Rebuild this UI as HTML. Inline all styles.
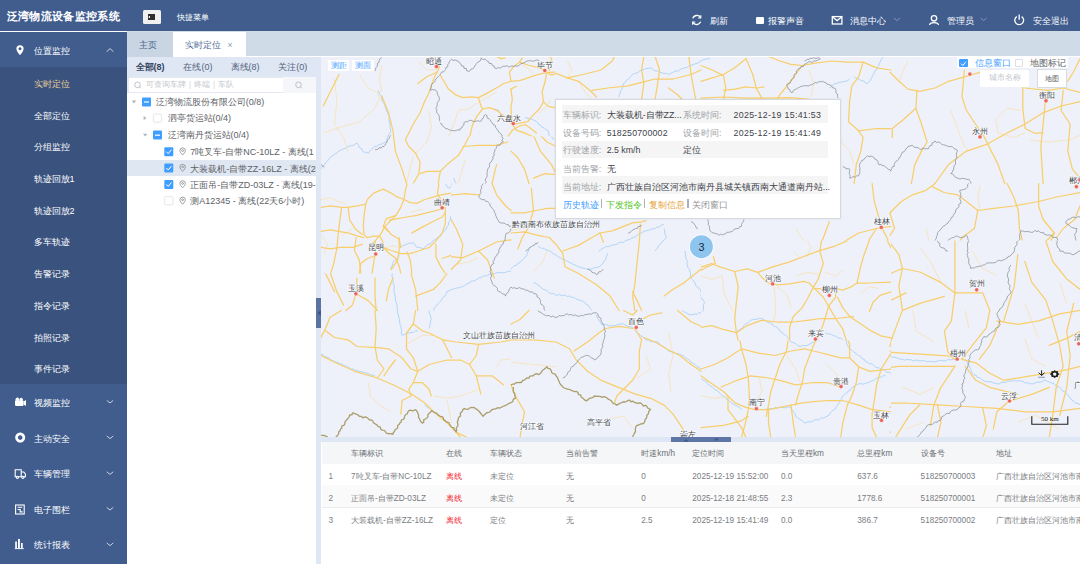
<!DOCTYPE html><html><head><meta charset="utf-8"><style>
*{box-sizing:border-box;margin:0;padding:0}
html,body{width:1080px;height:564px;overflow:hidden;background:#fff;font-family:"Liberation Sans",sans-serif;}
.abs{position:absolute}
.t{position:absolute;white-space:nowrap;line-height:1}
svg{position:absolute;left:0;top:0}
</style></head><body><div class="abs" style="left:0px;top:0px;width:1080px;height:31.2px;background:#405d8e"></div>
<div class="t" style="left:6.5px;top:10.90px;font-size:11.4px;color:#fff;font-weight:bold;letter-spacing:0.36px">泛湾物流设备监控系统</div>
<div class="abs" style="left:143px;top:10px;width:18px;height:14.4px;background:#f0f0f0;border-radius:1.5px"></div>
<div class="abs" style="left:148.2px;top:14px;width:6.8px;height:1.7px;background:#2e2e2e"></div>
<div class="abs" style="left:150.2px;top:16.3px;width:4.8px;height:1.4px;background:#2e2e2e"></div>
<div class="abs" style="left:148.4px;top:16px;width:1px;height:2px;background:#6a5a3a"></div>
<div class="abs" style="left:148.2px;top:18.3px;width:6.8px;height:1.7px;background:#2e2e2e"></div>
<div class="t" style="left:177px;top:13.60px;font-size:7.8px;color:#fff;">快捷菜单</div>
<div class="t" style="left:709.5px;top:16.60px;font-size:9px;color:#fff;">刷新</div>
<div class="abs" style="left:756px;top:16.5px;width:7.5px;height:7px;background:#fff;border-radius:1px"></div>
<div class="t" style="left:768px;top:16.60px;font-size:9px;color:#fff;">报警声音</div>
<div class="t" style="left:850px;top:16.60px;font-size:9px;color:#fff;">消息中心</div>
<div class="t" style="left:947px;top:16.60px;font-size:9px;color:#fff;">管理员</div>
<div class="t" style="left:1032.5px;top:16.60px;font-size:9px;color:#fff;">安全退出</div>

<svg width="1080" height="32" style="left:0;top:0">
 <g fill="none" stroke="#fff" stroke-width="1.3">
  <path d="M700.6 17.6 A4.3 4.3 0 0 0 692.8 18.4"/><path d="M692.8 22.4 A4.3 4.3 0 0 0 700.6 21.6"/>
  <path d="M700.8 15.3 L700.8 18 L698.1 18" stroke-width="1.1"/><path d="M692.6 24.7 L692.6 22 L695.3 22" stroke-width="1.1"/>
  <rect x="832.3" y="16.6" width="9.6" height="7.4"/><path d="M832.3 16.8 L837.1 20.6 L841.9 16.8"/>
  <path d="M894 18 L897 20.6 L900 18" stroke="#8a9cbd" stroke-width="0.9"/>
  <path d="M980.5 18 L983.5 20.6 L986.5 18" stroke="#8a9cbd" stroke-width="0.9"/>
  <circle cx="934" cy="18.3" r="2.7"/><path d="M929.6 25 C929.8 21.8 938.2 21.8 938.4 25"/>
  <path d="M1016.8 16.6 A4.4 4.4 0 1 0 1021.6 16.6"/><path d="M1019.2 14.6 L1019.2 19.8"/>
 </g>
</svg>
<div class="abs" style="left:0px;top:31.5px;width:126.5px;height:532.5px;background:#405d8e"></div>
<div class="abs" style="left:0px;top:67px;width:126.5px;height:317.3px;background:#39527e"></div>
<div class="t" style="left:33.7px;top:46.50px;font-size:9px;color:#fff;">位置监控</div>
<div class="t" style="left:33.5px;top:79.77px;font-size:9px;color:#f0d49a;">实时定位</div>
<div class="t" style="left:33.5px;top:111.50px;font-size:9px;color:#fff;">全部定位</div>
<div class="t" style="left:33.5px;top:143.23px;font-size:9px;color:#fff;">分组监控</div>
<div class="t" style="left:33.5px;top:174.96px;font-size:9px;color:#fff;">轨迹回放1</div>
<div class="t" style="left:33.5px;top:206.69px;font-size:9px;color:#fff;">轨迹回放2</div>
<div class="t" style="left:33.5px;top:238.42px;font-size:9px;color:#fff;">多车轨迹</div>
<div class="t" style="left:33.5px;top:270.14px;font-size:9px;color:#fff;">告警记录</div>
<div class="t" style="left:33.5px;top:301.88px;font-size:9px;color:#fff;">指令记录</div>
<div class="t" style="left:33.5px;top:333.61px;font-size:9px;color:#fff;">拍照记录</div>
<div class="t" style="left:33.5px;top:365.34px;font-size:9px;color:#fff;">事件记录</div>
<div class="t" style="left:33.5px;top:398.80px;font-size:9px;color:#fff;">视频监控</div>
<div class="t" style="left:33.5px;top:434.50px;font-size:9px;color:#fff;">主动安全</div>
<div class="t" style="left:33.5px;top:470.40px;font-size:9px;color:#fff;">车辆管理</div>
<div class="t" style="left:33.5px;top:505.80px;font-size:9px;color:#fff;">电子围栏</div>
<div class="t" style="left:33.5px;top:541.40px;font-size:9px;color:#fff;">统计报表</div>

<svg width="127" height="564" style="left:0;top:0">
 <g fill="#fff">
  <path d="M20 45.2 a3.6 3.6 0 0 1 3.6 3.6 c0 2.6 -3.6 6.3 -3.6 6.3 c0 0 -3.6 -3.7 -3.6 -6.3 a3.6 3.6 0 0 1 3.6 -3.6z M20 47.3 a1.5 1.5 0 1 0 0.01 0z" fill-rule="evenodd"/>
  <!-- video -->
  <rect x="15" y="400.3" width="8.5" height="5.6" rx="0.8"/><circle cx="17.4" cy="399.3" r="1.8"/><circle cx="21.2" cy="399.3" r="1.6"/><path d="M23.5 401.5 L26 400 L26 406 L23.5 404.5z"/>
  <!-- safety ring -->
  <path d="M20.2 432.6 a5 5 0 1 0 0.01 0z M20.2 435.3 a2.3 2.3 0 1 1 -0.01 0z" fill-rule="evenodd"/>
  <!-- bars -->
  <rect x="15.2" y="541.5" width="1.7" height="7"/><rect x="18" y="539" width="1.9" height="9.5"/><rect x="21" y="543" width="1.7" height="5.5"/><rect x="14.8" y="548.2" width="9" height="0.9"/>
 </g>
 <g fill="none" stroke="#fff" stroke-width="1.1">
  <path d="M15.2 469.8 h6 v7 h-6z M21.2 472 h2.6 l1.6 2 v2.8 h-4.2"/><circle cx="17.4" cy="477.3" r="1.1" fill="#405d8e"/><circle cx="22.9" cy="477.3" r="1.1" fill="#405d8e"/>
  <rect x="15.6" y="505" width="8.6" height="9" /><path d="M17.6 507.3 h4.6 M17.6 509.5 h2.6 v2.4 h2.4"/>
 </g>
 <g fill="none" stroke="#c9d3e4" stroke-width="1">
  <path d="M106.6 51.7 L110 48.6 L113.4 51.7"/>
  <path d="M106.8 400.4 L110 403 L113.2 400.4"/>
  <path d="M106.8 436 L110 438.6 L113.2 436"/>
  <path d="M106.8 471.8 L110 474.4 L113.2 471.8"/>
  <path d="M106.8 507.4 L110 510 L113.2 507.4"/>
  <path d="M106.8 543 L110 545.6 L113.2 543"/>
 </g>
</svg>
<div class="abs" style="left:126.5px;top:31.2px;width:953.5px;height:25.3px;background:#d0dbe8"></div>
<div class="abs" style="left:127px;top:31.5px;width:46px;height:25px;background:#c9d5e3"></div>
<div class="abs" style="left:173px;top:31.5px;width:72.5px;height:25px;background:#fff"></div>
<div class="t" style="left:139.3px;top:40.70px;font-size:9px;color:#4a6591;">主页</div>
<div class="t" style="left:185.3px;top:40.70px;font-size:9px;color:#4a6591;">实时定位</div>
<div class="t" style="left:227.5px;top:40.75px;font-size:8.5px;color:#8a9ab5;">×</div>
<div class="abs" style="left:126.5px;top:56.5px;width:194.5px;height:507.5px;background:#dee7f3"></div>
<div class="t" style="left:135.6px;top:63.30px;font-size:9px;color:#34435e;font-weight:bold;">全部(8)</div>
<div class="t" style="left:183.4px;top:63.30px;font-size:9px;color:#56657e;">在线(0)</div>
<div class="t" style="left:230.6px;top:63.30px;font-size:9px;color:#56657e;">离线(8)</div>
<div class="t" style="left:278.2px;top:63.30px;font-size:9px;color:#56657e;">关注(0)</div>
<div class="abs" style="left:127.5px;top:76.7px;width:155px;height:16.4px;background:#fff;border:0.7px solid #e6e9ef;border-right:none"></div>
<div class="abs" style="left:283px;top:76.5px;width:32.7px;height:16.8px;background:#f4f6f9"></div>
<div class="t" style="left:146px;top:81.20px;font-size:7.6px;color:#c2c6cc;">可查询车牌｜终端｜车队</div>
<div class="abs" style="left:127px;top:93.3px;width:189.3px;height:470.7px;background:#fff"></div>
<div class="abs" style="left:127px;top:160.2px;width:189.3px;height:16px;background:#dfe7f2"></div>

<svg width="330" height="564" style="left:0;top:0">
 <g fill="none" stroke="#b5b9bf" stroke-width="0.9">
  <circle cx="137.5" cy="84.8" r="2.8"/><path d="M139.5 86.8 L141 88.3"/>
  <circle cx="298.5" cy="84.8" r="2.8"/><path d="M300.5 86.8 L302 88.3"/>
 </g>
 <g fill="#b0b4ba">
  <path d="M131.8 100.6 L136.2 100.6 L134 103.4z"/>
  <path d="M143.6 115.9 L146.4 118.1 L143.6 120.3z"/>
  <path d="M143 133.8 L147.4 133.8 L145.2 136.6z"/>
 </g>
 <g>
  <rect x="142" y="97.4" width="9" height="9" rx="1" fill="#409eff"/><rect x="144" y="101.4" width="5" height="1.2" fill="#fff"/>
  <rect x="153.4" y="114" width="8.2" height="8.2" rx="1" fill="#fff" stroke="#dcdfe6" stroke-width="0.8"/>
  <rect x="153" y="130.6" width="9" height="9" rx="1" fill="#409eff"/><rect x="155" y="134.6" width="5" height="1.2" fill="#fff"/>
  <rect x="164.3" y="147.2" width="9" height="9" rx="1" fill="#409eff"/><path d="M166.3 151.6 L168.2 153.6 L171.4 149.7" fill="none" stroke="#fff" stroke-width="1"/>
  <rect x="164.3" y="163.6" width="9" height="9" rx="1" fill="#409eff"/><path d="M166.3 168 L168.2 170 L171.4 166.1" fill="none" stroke="#fff" stroke-width="1"/>
  <rect x="164.3" y="180" width="9" height="9" rx="1" fill="#409eff"/><path d="M166.3 184.4 L168.2 186.4 L171.4 182.5" fill="none" stroke="#fff" stroke-width="1"/>
  <rect x="164.7" y="196.6" width="8.2" height="8.2" rx="1" fill="#fff" stroke="#dcdfe6" stroke-width="0.8"/>
 </g>
 <g fill="none" stroke="#8f949a" stroke-width="0.9">
  <path d="M182.6 155 c-1.6 -1.8 -2.7 -3 -2.7 -4.4 a2.7 2.7 0 0 1 5.4 0 c0 1.4 -1.1 2.6 -2.7 4.4z"/><circle cx="182.6" cy="150.6" r="0.9"/>
  <path d="M182.6 171.4 c-1.6 -1.8 -2.7 -3 -2.7 -4.4 a2.7 2.7 0 0 1 5.4 0 c0 1.4 -1.1 2.6 -2.7 4.4z"/><circle cx="182.6" cy="167" r="0.9"/>
  <path d="M182.6 187.8 c-1.6 -1.8 -2.7 -3 -2.7 -4.4 a2.7 2.7 0 0 1 5.4 0 c0 1.4 -1.1 2.6 -2.7 4.4z"/><circle cx="182.6" cy="183.4" r="0.9"/>
  <path d="M182.6 204.2 c-1.6 -1.8 -2.7 -3 -2.7 -4.4 a2.7 2.7 0 0 1 5.4 0 c0 1.4 -1.1 2.6 -2.7 4.4z"/><circle cx="182.6" cy="199.8" r="0.9"/>
 </g>
</svg>
<div class="abs" style="left:127px;top:93px;width:189.3px;height:130px;overflow:hidden">
<div class="t" style="left:28.80000000000001px;top:5.10px;font-size:9px;color:#606266;">泛湾物流股份有限公司(0/8)</div>
<div class="t" style="left:40.5px;top:20.80px;font-size:9px;color:#606266;">泗亭货运站(0/4)</div>
<div class="t" style="left:40.5px;top:37.60px;font-size:9px;color:#606266;">泛湾南丹货运站(0/4)</div>
<div class="t" style="left:63.30000000000001px;top:55.10px;font-size:9px;color:#606266;">7吨叉车-自带NC-10LZ - 离线(1</div>
<div class="t" style="left:63.30000000000001px;top:71.50px;font-size:9px;color:#606266;">大装载机-自带ZZ-16LZ - 离线(2</div>
<div class="t" style="left:63.30000000000001px;top:87.90px;font-size:9px;color:#606266;">正面吊-自带ZD-03LZ - 离线(19-</div>
<div class="t" style="left:63.30000000000001px;top:104.10px;font-size:9px;color:#606266;">测A12345 - 离线(22天6小时)</div>
</div>
<div class="abs" style="left:316.3px;top:298px;width:5px;height:30px;background:#5b73a0"></div>
<svg width="1080" height="564" style="left:0;top:0"><path d="M320.8 310.2 L317.6 313 L320.8 315.8z" fill="#3a5182"/></svg>
<div class="abs" style="left:321px;top:56.5px;width:759px;height:381px;background:#eef1f9;overflow:hidden">
<svg width="759" height="381" viewBox="321 56.5 759 381" style="left:0;top:0">
<style>.lr{fill:none;stroke:#f6e3b9;stroke-width:0.9;stroke-linejoin:round}.rv{fill:none;stroke:#a9d1f7;stroke-width:0.9;stroke-linejoin:round}.mr{fill:none;stroke:#f8ce6c;stroke-width:1.25;stroke-linejoin:round;stroke-linecap:round}.gb{fill:none;stroke:#8e939c;stroke-width:0.8;stroke-linejoin:round}.cb{fill:none;stroke:#ab9e6c;stroke-width:1.3;stroke-linejoin:round}</style>
<clipPath id="cpE2"><rect x="321" y="183" width="130" height="90"/></clipPath>
<clipPath id="cpG2"><rect x="701" y="240" width="190" height="100"/></clipPath>
<clipPath id="cpL2"><rect x="891" y="240" width="189" height="197"/></clipPath>
<clipPath id="cpAB"><rect x="440" y="56" width="115" height="80"/></clipPath>
<mask id="mk" maskUnits="userSpaceOnUse" x="0" y="0" width="1100" height="600"><rect x="0" y="0" width="1100" height="600" fill="#fff"/><rect x="321" y="183" width="130" height="90" fill="#000"/><rect x="701" y="240" width="190" height="100" fill="#000"/><rect x="891" y="240" width="189" height="197" fill="#000"/><rect x="440" y="56" width="115" height="80" fill="#000"/></mask>
<g mask="url(#mk)"><polyline class="lr" points="359.3,74.0 368.3,87.5 377.3,92.0 379.5,98.8 372.8,110.0 359.3,121.3 343.5,125.8 323.3,132.5"/><polyline class="lr" points="334.5,78.5 336.8,101.0 334.5,123.5 343.5,137.0 348.0,150.6"/><polyline class="lr" points="381.8,65.0 379.5,78.5 381.8,92.0"/><polyline class="lr" points="429.1,110.0 431.3,128.0 426.8,141.5 415.6,152.8"/><polyline class="lr" points="447.1,130.3 456.1,112.3 478.6,105.5 487.6,104.4"/><polyline class="lr" points="413.3,155.1 408.8,173.1 406.5,183.0"/><polyline class="lr" points="465.1,159.6 458.3,183.0"/><polyline class="lr" points="417.8,60.5 426.8,69.5 435.8,69.5"/><polyline class="lr" points="567.3,60.5 571.8,69.5 567.3,77.4"/><polyline class="lr" points="578.5,80.8 585.3,92.0 592.0,98.8"/><polyline class="lr" points="515.5,85.3 524.5,96.5 533.5,107.8"/><polyline class="lr" points="809.1,69.5 813.6,83.0 811.3,96.5"/><polyline class="lr" points="840.6,141.5 849.6,150.6 854.1,164.1"/><polyline class="lr" points="950.8,110.0 957.5,128.0 964.3,146.0 968.8,150.6"/><polyline class="lr" points="995.8,119.0 1007.1,107.8 1020.6,110.0"/><polyline class="lr" points="995.8,119.0 998.1,132.5 1013.8,137.0 1025.1,132.5"/><polyline class="lr" points="1029.6,139.3 1047.6,141.5 1070.1,139.3 1080.0,134.8"/><polyline class="lr" points="908.0,60.5 903.5,69.5 899.0,80.8"/><polyline class="lr" points="321.0,196.5 334.5,198.8 348.0,203.3"/><polyline class="lr" points="406.5,212.3 417.8,207.8 429.1,205.5"/><polyline class="lr" points="456.1,264.0 467.3,261.8 478.6,257.3"/><polyline class="lr" points="533.5,270.8 542.5,261.8 547.0,250.5"/><polyline class="lr" points="529.0,223.5 520.0,228.0 511.0,230.3"/><polyline class="lr" points="773.0,284.3 777.5,300.1 779.8,310.0"/><polyline class="lr" points="797.8,273.0 806.8,268.5 820.3,266.3"/><polyline class="lr" points="838.3,270.8 845.1,282.1"/><polyline class="lr" points="795.6,228.0 804.6,241.5 806.8,255.0"/><polyline class="lr" points="926.0,228.0 930.5,246.0 928.3,264.0"/><polyline class="lr" points="980.0,185.3 977.8,196.5 980.0,210.0"/><polyline class="lr" points="1025.1,273.0 1038.6,268.5 1047.6,259.5"/><polyline class="lr" points="368.3,382.0 370.5,395.5 379.5,404.6 390.8,411.3"/><polyline class="lr" points="406.5,343.8 422.3,334.8 433.6,334.8"/><polyline class="lr" points="433.6,395.5 447.1,397.8 460.6,395.5 478.6,388.8"/><polyline class="lr" points="447.1,400.0 449.3,411.3 451.6,422.6"/><polyline class="lr" points="496.6,366.3 501.1,359.5 511.0,358.4"/><polyline class="lr" points="668.6,332.5 673.1,355.0 668.6,373.0 670.8,391.0"/><polyline class="lr" points="646.1,355.0 650.6,368.5 637.1,377.5"/><polyline class="lr" points="610.1,418.1 623.6,415.8 632.6,427.1"/><polyline class="lr" points="511.0,361.8 533.5,364.0 556.0,366.3"/><polyline class="lr" points="759.5,377.5 761.8,391.0 757.3,400.0"/><polyline class="lr" points="786.5,355.0 795.6,368.5 800.1,382.0"/><polyline class="lr" points="827.1,364.0 836.1,373.0 840.6,384.3"/><polyline class="lr" points="701.0,395.5 714.5,397.8 728.0,395.5"/><polyline class="lr" points="773.0,310.0 775.3,323.5 773.0,337.0"/><polyline class="lr" points="912.5,310.0 917.0,323.5 912.5,337.0"/><polyline class="lr" points="894.5,377.5 899.0,391.0 896.8,404.6"/><polyline class="lr" points="1011.6,337.0 1016.1,355.0 1011.6,368.5"/><polyline class="lr" points="1029.6,343.8 1047.6,337.0 1065.6,332.5"/></g>
<g clip-path="url(#cpE2)"><polyline class="lr" points="321.0,199.0 330.6,197.4 337.0,200.5 346.5,203.7"/><polyline class="lr" points="321.0,234.0 327.4,243.6 324.2,253.2"/><polyline class="lr" points="341.7,235.6 348.1,230.9 352.9,227.7"/><polyline class="lr" points="410.3,211.7 416.7,210.1 423.1,208.5"/><polyline class="lr" points="386.4,246.8 392.8,245.2 397.6,246.8"/></g>
<g clip-path="url(#cpG2)"><polyline class="lr" points="773.7,284.3 775.4,298.5 775.4,314.4 771.9,325.1"/><polyline class="lr" points="777.2,286.1 786.1,293.2 791.4,307.4"/><polyline class="lr" points="807.3,240.0 810.9,247.1 807.3,256.0"/><polyline class="lr" points="796.7,275.4 807.3,271.9 818.0,273.7"/><polyline class="lr" points="825.1,271.9 835.7,275.4 842.8,270.1"/><polyline class="lr" points="860.5,293.2 869.4,286.1 878.2,287.9"/><polyline class="lr" points="701.0,275.4 711.6,279.0 722.3,275.4"/><polyline class="lr" points="722.3,275.4 724.0,293.2 732.9,310.9"/><polyline class="lr" points="793.2,250.6 800.3,257.7 807.3,254.2"/></g>
<g clip-path="url(#cpL2)"><polyline class="lr" points="850.0,292.4 871.0,288.9 891.9,292.4"/><polyline class="lr" points="912.9,309.9 916.4,330.9 933.9,341.4"/><polyline class="lr" points="972.3,250.5 982.8,268.0 996.8,275.0"/><polyline class="lr" points="1024.8,337.9 1031.8,358.8 1045.7,365.8"/><polyline class="lr" points="902.4,386.8 919.9,393.8 933.9,386.8"/><polyline class="lr" points="850.0,386.8 871.0,386.8 888.4,393.8"/><polyline class="lr" points="1017.8,421.8 1035.2,414.8 1059.7,428.7"/><polyline class="lr" points="905.9,428.7 923.4,421.8"/><polyline class="lr" points="965.3,309.9 968.8,327.4"/><polyline class="lr" points="1059.7,281.9 1066.7,302.9"/><polyline class="lr" points="919.9,247.0 930.4,261.0 940.9,281.9"/><polyline class="lr" points="864.0,337.9 881.5,344.9 888.4,355.3"/><polyline class="lr" points="1024.8,302.9 1038.7,337.9"/></g>
<g clip-path="url(#cpAB)"><polyline class="lr" points="448.5,136.0 454.2,122.7 458.4,109.9 468.4,108.5 476.9,102.8 486.8,97.1 496.7,91.5"/><polyline class="lr" points="522.3,64.5 530.8,70.2 533.6,74.4"/><polyline class="lr" points="539.3,112.7 547.8,104.2 550.6,98.6"/></g>
<g mask="url(#mk)"><polyline class="rv" points="321.0,168.6 322.1,166.8 323.2,165.0 325.0,163.9 325.7,161.8 327.5,160.6 328.6,158.8 330.0,157.3 331.4,155.7 333.4,155.1 334.7,153.4 336.7,152.7 338.1,151.2 339.8,150.1 341.8,149.3 343.5,148.3 345.6,147.9 347.2,146.2 349.2,145.5 351.3,145.2 353.4,144.9 355.1,143.6 357.0,142.7 358.5,144.6 359.3,147.0 361.8,148.2 362.6,150.6 364.3,151.8 366.5,151.8 368.3,152.8 369.6,150.8 371.3,149.0 373.2,147.5 375.0,146.0 377.1,145.7 378.6,144.1 380.7,143.9 382.6,143.2 384.3,142.1 386.3,141.5 387.1,139.7 387.2,137.6 388.0,135.7 388.9,133.9 390.3,132.3 390.8,130.3 390.4,128.1 389.9,125.8 389.9,123.5 389.4,121.3 388.9,119.1 389.3,116.7 388.5,114.5 387.9,112.5 386.5,110.7 386.1,108.6 385.2,106.6 384.8,104.5 383.8,102.6 382.4,100.9 381.8,98.8 381.6,96.3 379.6,94.5 379.1,92.1 378.4,89.8"/><polyline class="rv" points="453.8,177.6 454.6,180.4 456.1,183.0"/><polyline class="rv" points="619.1,96.5 619.2,94.4 620.3,92.7 620.4,90.5 621.9,88.9 622.6,87.0 623.0,85.0 623.6,83.0 625.4,81.9 626.4,79.8 628.3,78.7 629.7,77.1 631.1,75.6 632.6,74.0 634.3,73.1 636.4,72.6 638.2,71.9 639.8,70.4 641.6,69.5 643.9,69.2 645.9,67.8 648.4,68.1 650.6,67.3 652.3,68.3 653.9,69.7 655.8,70.4 657.9,70.6 659.6,71.8 661.9,72.2 664.0,73.1 666.5,72.8 668.6,74.0 670.4,73.2 672.2,72.1 674.0,71.3 675.9,70.4 678.1,70.6 679.8,69.5 681.5,68.3 683.5,67.7 685.4,67.1 687.5,67.0 689.0,65.2 691.1,65.0 693.1,64.0 695.1,63.3 697.3,62.8 699.2,61.8 701.0,60.5"/><polyline class="rv" points="531.3,119.0 532.8,120.4 535.0,120.6 536.7,121.6 538.6,122.5 540.3,123.5 541.6,125.6 543.2,127.4 545.7,128.3 547.0,130.3 548.7,131.8 550.0,133.7 551.4,135.5 552.4,137.5 553.8,139.3"/><polyline class="rv" points="829.3,87.5 831.1,86.5 832.5,85.0 834.0,83.6 836.1,83.0 838.3,82.3 840.5,81.7 842.9,81.4 845.1,80.8 847.6,80.2 849.6,78.5"/><polyline class="rv" points="854.1,76.3 855.9,77.5 857.9,78.2 859.8,79.3 861.7,80.3 864.0,80.5 865.4,82.6 867.6,83.0 869.0,81.5 870.3,79.9 871.3,78.2 872.1,76.3 873.1,74.3 874.2,72.4 875.0,70.3 876.8,68.9 877.2,66.6 878.8,65.0 879.2,62.9 880.3,61.2 881.1,59.4 882.2,57.7 883.4,56.0"/><polyline class="rv" points="701.0,60.5 703.1,59.3 705.3,58.7 707.6,58.3 710.0,58.3"/><polyline class="rv" points="390.8,266.3 391.5,268.5 391.7,270.8 392.4,273.0 391.9,275.4 392.6,277.6 393.0,279.8 393.0,282.1 393.9,284.3 394.4,286.5 393.9,288.9 394.0,291.2 394.5,293.4 395.3,295.6 395.2,297.7 395.5,299.7 395.9,301.8 397.0,303.7 396.9,305.9 397.4,307.9 397.5,310.0"/><polyline class="rv" points="433.6,310.0 434.3,307.9 435.5,306.1 437.0,304.6 438.2,302.9 439.9,301.5 441.4,300.0 442.1,297.9 443.9,296.6 445.2,294.9 446.4,293.1 447.1,291.1 448.9,290.2 450.8,289.4 452.7,288.8 454.7,288.1 456.6,287.5 458.7,287.4 460.6,286.6 462.6,286.2 464.4,285.2 466.0,283.8 467.9,283.1 469.8,282.4 471.1,280.6 473.3,280.5 475.2,279.9 477.0,278.8 478.6,277.6 480.6,277.2 482.4,276.2 484.2,275.2 486.4,275.4 488.2,274.1 490.3,274.1 492.1,273.0 494.4,273.4 496.6,272.3 498.8,272.1 501.1,271.9 503.6,272.3 506.1,271.7 508.5,270.6 511.0,270.8"/><polyline class="rv" points="447.1,189.8 447.8,187.8 448.9,186.1 450.9,185.0 451.6,183.0"/><polyline class="rv" points="598.8,250.5 600.7,249.8 601.9,247.9 604.1,247.5 605.6,246.0 607.9,246.2 610.1,245.4 612.3,244.5 614.6,244.3 616.8,243.8 618.5,242.6 620.3,241.7 622.7,242.1 624.4,241.0 626.2,240.1 628.1,239.3 630.1,238.9 631.6,237.4 633.7,237.0 635.5,236.1 637.1,234.8 638.7,233.5 640.5,232.7 642.3,231.8 644.1,230.9 646.1,230.3 648.4,229.8 650.5,228.8 652.8,228.5 655.1,228.0 656.6,226.7 658.9,226.7 660.4,225.1 662.3,224.4 664.1,223.5"/><polyline class="rv" points="655.1,250.5 656.3,248.9 657.8,247.5 658.4,245.4 659.6,243.8 661.7,242.5 663.0,240.4 664.7,238.7 666.3,237.0 665.8,234.8 664.6,232.7 664.6,230.3 664.1,228.0"/><polyline class="rv" points="511.0,268.5 512.5,266.8 514.2,265.3 516.7,264.8 517.9,262.8 520.0,261.8 521.7,260.1 523.6,258.6 525.1,256.8 526.8,255.0 527.3,252.7 528.3,250.5 529.0,248.3"/><polyline class="rv" points="538.0,246.0 539.9,246.9 541.6,247.9 543.8,247.8 545.5,249.1 547.5,249.5 549.3,250.5 551.3,251.4 552.8,253.1 554.9,253.9 556.7,255.1 558.5,256.5 560.5,257.3 562.1,258.7 564.2,259.0 565.9,260.1 567.7,260.9 569.5,261.8 571.3,262.7 573.0,263.8 575.0,264.4 576.7,265.4 578.5,266.3 580.8,266.7 582.9,267.8 585.2,267.9 587.4,268.6 589.8,268.5 592.2,268.6 594.2,267.1 596.6,266.9 598.8,266.3 600.9,265.0 602.5,263.3 603.5,260.9 605.6,259.5 605.8,257.1 607.0,255.0 607.8,252.8"/><polyline class="rv" points="533.5,282.1 535.6,282.7 537.3,284.0 539.2,284.9 540.6,286.8 542.3,288.0 544.0,289.3 546.4,289.5 547.8,291.3 549.6,292.4 551.5,293.3 553.6,293.1 555.5,294.3 557.4,294.7 559.6,293.9 561.4,295.2 563.5,294.7 565.5,295.0 567.4,296.0 569.5,295.6 571.3,296.8 573.7,296.8 575.5,298.0 577.4,299.0 579.5,299.6 581.5,300.2 583.4,301.2 585.3,302.3 586.4,304.1 588.5,304.9 589.3,307.0 590.8,308.4 592.0,310.0"/><polyline class="rv" points="684.3,250.5 685.5,252.5 685.6,254.6 685.7,256.8 686.4,258.9 687.5,260.8 686.8,263.2 687.6,265.2 687.9,267.3 689.6,269.1 689.9,271.2 690.7,273.2 690.2,275.6 691.1,277.6 692.6,279.1 694.0,280.6 694.9,282.6 695.6,284.6 696.9,286.3 698.8,287.5 700.2,289.1 701.0,291.1"/><polyline class="rv" points="701.0,293.3 701.0,295.7 702.0,297.8 702.4,300.1 703.3,302.3 702.6,304.8 701.0,306.8"/><polyline class="rv" points="321.0,353.9 323.2,354.3 324.7,356.1 326.8,356.7 329.0,357.2 330.4,359.3 332.5,359.9 334.5,360.7 336.2,361.9 338.4,361.8 339.8,363.6 342.1,363.4 343.5,365.2 345.6,365.5 347.5,366.2 349.2,367.3 350.8,368.6 353.1,368.5 354.8,369.7 356.9,369.8 358.8,370.9 361.0,371.1 363.0,371.6 365.0,372.2 367.1,372.7 369.1,373.5 371.1,374.3 373.1,374.9 375.0,375.7"/><polyline class="rv" points="397.5,310.0 397.6,312.3 398.6,314.5 398.7,316.8 399.5,318.9 399.6,321.2 399.8,323.5 400.9,325.6 401.0,327.9 401.8,330.1 401.3,332.6 402.0,334.8 404.3,334.1 406.4,332.9 408.8,332.5 411.0,331.9 413.4,332.0 415.4,330.3 417.8,330.3"/><polyline class="rv" points="429.1,310.0 429.2,312.4 430.3,314.5 430.8,316.8 431.3,319.0 430.3,321.1 430.3,323.5 429.6,325.8 429.1,328.0"/><polyline class="rv" points="424.6,404.6 426.1,405.9 427.6,407.4 429.7,407.7 431.3,409.1"/><polyline class="rv" points="596.5,314.5 597.0,316.5 598.1,318.2 599.1,320.0 600.3,321.6 601.0,323.5 603.4,323.9 605.7,324.0 607.9,324.7 610.1,325.8 612.2,324.8 614.6,325.3 616.8,324.3 619.0,323.8 621.2,323.3 623.6,323.5 625.6,324.8 627.9,325.7 630.2,326.3 632.6,326.9 634.3,328.6 635.9,330.4 637.1,332.5 639.0,333.6 640.7,335.2 642.8,336.2 644.3,337.9 646.1,339.3 648.4,339.4 650.4,340.8 652.7,341.3 655.1,341.1 657.3,341.5 659.2,342.5 660.1,344.6 662.3,345.2 663.9,346.5 665.8,347.4 667.1,349.1 668.6,350.5 670.5,351.1 672.4,351.8 674.5,352.1 676.3,353.1 678.5,353.1 680.3,354.1 682.1,355.0 684.2,355.9 685.8,357.6 687.9,358.6 689.7,359.9 691.1,361.8 693.2,362.9 695.3,364.2 697.0,365.9 699.0,367.2 701.0,368.5"/><polyline class="rv" points="682.1,310.0 683.7,311.2 685.6,312.0 687.4,313.0 689.1,314.1 691.1,314.5 693.0,313.9 695.0,313.4 697.2,313.8 698.9,312.2 701.0,312.3"/><polyline class="rv" points="701.0,377.5 702.4,379.1 704.1,380.3 706.2,380.9 707.1,383.0 708.7,384.4 710.5,385.4 712.3,386.5 713.7,388.1 715.2,389.5 717.4,390.0 718.7,391.7 720.3,393.0 721.6,394.6 723.5,395.5 724.9,397.2 726.4,398.5 728.3,399.5 729.6,401.1 731.4,402.2 733.0,403.5 734.8,404.6 736.7,405.4 738.5,406.3 740.1,407.5 741.5,409.1"/><polyline class="rv" points="757.3,319.0 759.2,319.6 761.2,320.0 762.7,321.7 764.8,322.1 766.6,322.9 768.5,323.5 770.3,324.6 772.0,325.5 773.9,326.2 776.1,326.5 777.5,328.0 779.1,329.7 780.9,331.0 782.9,332.1 784.7,333.5 786.5,334.8 787.5,336.6 789.3,337.8 789.6,340.0 791.0,341.5 793.0,342.1 794.9,342.8 796.6,343.9 798.1,345.4 800.1,346.0 802.2,345.1 804.6,345.2 807.0,345.0 809.1,343.8 810.9,342.9 812.6,341.8 814.4,341.0 816.4,340.4 818.1,339.3 820.4,339.1 822.6,338.3 824.9,337.8 827.1,337.0 828.6,335.6 830.5,334.8 832.3,334.0 834.4,333.7 836.1,332.5 838.0,333.6 839.6,335.3 841.9,336.0 843.6,337.4 845.1,339.3 846.3,340.9 846.7,343.0 847.5,344.8 848.5,346.6 849.6,348.3 851.6,349.4 853.2,351.0 855.0,352.3 856.8,353.6 858.6,355.0 860.7,355.9 861.9,358.2 864.2,358.7 865.4,361.0 867.6,361.8 869.2,363.3 871.8,363.1 873.4,364.6 875.1,366.0 876.9,367.2 879.2,367.5 881.1,368.5 883.2,369.1 885.2,370.0 886.8,371.8 889.2,371.8 891.0,373.0"/><polyline class="rv" points="764.0,409.1 766.3,408.8 768.5,407.9 770.8,408.1 773.1,408.4 775.2,406.9 777.6,407.6 779.8,406.8 782.0,406.8 784.3,407.3 786.5,407.1 788.8,406.4 791.0,406.8 791.5,408.9 792.9,410.4 794.3,411.9 795.3,413.7 795.6,415.8 797.4,417.1 799.2,418.5 801.1,419.6 803.1,420.8 804.6,422.6 806.8,421.8 809.0,421.2 811.4,421.3 813.6,420.3 815.3,419.0 817.5,419.4 819.5,418.8 821.1,417.2 823.4,417.7 825.2,416.7 827.1,415.8 829.0,414.7 829.9,412.6 831.4,411.2 833.0,409.7 835.1,408.8 836.1,406.8 837.3,405.2 838.2,403.3 839.4,401.7 840.6,400.0 841.4,398.2 842.3,396.3 843.5,394.7 845.1,393.3 847.0,392.4 848.1,390.5 850.3,389.9 851.3,387.9 852.9,386.6 854.7,385.6 856.3,384.3 858.5,383.4 860.8,383.2 863.2,383.6 865.4,383.0 867.6,382.0 869.6,381.5 871.3,380.4 873.3,379.9 875.1,379.0 876.6,377.5 878.9,377.0 881.2,376.7 883.2,375.2 885.6,375.3"/><polyline class="rv" points="890.0,355.0 892.2,355.9 894.5,356.1 896.7,357.1 899.0,357.5 901.3,357.5 903.5,358.4 905.6,358.7 906.8,360.7 909.1,360.6 910.7,362.0 912.5,362.9 914.8,362.9 917.0,363.1 919.2,363.9 921.5,364.5 923.8,364.0 926.1,363.9 928.2,364.7 930.6,364.4 932.8,365.0 935.0,365.2 937.3,364.8 939.5,364.2 941.7,364.0 944.0,363.8 946.3,364.0 948.7,363.7 950.8,362.3 952.9,361.1 955.3,360.7 957.7,360.6 960.0,360.2 962.0,358.9 964.3,358.4 966.4,359.1 968.1,360.3 970.0,361.3 971.6,362.7 973.3,364.0 974.7,365.6 975.4,367.5 976.3,369.3 976.8,371.3 977.8,373.0 978.7,375.2 980.2,376.8 981.9,378.4 983.3,380.2 984.6,382.0 986.8,382.4 989.1,382.6 991.3,382.9 993.7,382.9 995.9,383.6 998.1,384.3 1000.2,385.3 1002.6,384.5 1004.8,385.4 1007.0,386.0 1009.2,386.7 1011.6,386.5 1013.8,385.8 1016.0,385.5 1018.3,385.1 1020.5,384.9 1022.8,384.6 1025.1,384.3 1026.7,385.6 1028.6,386.2 1030.5,387.0 1032.8,386.7 1034.7,387.4 1036.3,388.8 1038.6,388.6 1040.9,388.4 1043.1,387.4 1045.4,387.1 1047.6,386.5 1049.2,385.1 1051.3,384.9 1053.4,384.8 1055.3,384.0 1057.2,383.3 1058.8,382.0 1060.3,383.5 1062.6,383.5 1064.5,384.3 1066.3,385.2 1067.8,386.5 1068.6,388.4 1069.1,390.4 1069.5,392.4 1070.6,394.2 1071.4,396.0 1072.4,397.8 1072.6,400.1 1073.5,402.3 1074.0,404.6 1074.6,406.8 1077.6,407.3 1080.0,409.1"/></g>
<g clip-path="url(#cpE2)"><polyline class="rv" points="400.8,246.8 402.6,245.2 404.9,244.5 407.1,243.6 409.1,242.4 411.5,243.1 413.5,242.0 415.0,244.5 416.7,246.8 419.0,246.9 421.0,247.5 423.1,248.4 424.5,246.9 426.2,245.6 427.5,244.0 429.8,243.5 431.5,242.3 432.7,240.4 434.6,239.2 436.6,238.0 438.3,236.3 440.6,235.6 441.5,233.5 443.1,231.8 444.4,229.9 446.3,228.5 446.9,226.1 448.6,224.5 448.6,221.9 450.4,219.8 450.4,217.3 451.0,214.9"/><polyline class="rv" points="391.2,269.1 391.2,266.9 392.3,264.9 392.8,262.8 393.5,260.7 395.4,259.6 397.1,258.4 398.3,256.7 399.2,254.8"/><polyline class="rv" points="445.4,183.0 446.8,185.5 448.6,187.8 451.0,186.2"/></g>
<g clip-path="url(#cpG2)"><polyline class="rv" points="701.0,296.7 701.9,298.7 703.7,300.1 704.5,302.0 703.5,304.1 703.5,306.4 703.5,308.7 702.8,310.9"/><polyline class="rv" points="736.4,332.2 737.7,330.4 739.4,329.1 741.3,328.2 742.9,326.9 744.0,324.9 745.5,323.4 747.5,322.5 749.1,321.2 750.6,319.8 752.7,319.2 754.8,318.7 757.0,318.8 759.0,317.7 761.3,318.0 763.5,318.8 765.5,320.1 767.4,321.8 769.7,322.4 771.9,323.3 773.3,325.2 775.5,326.2 777.5,327.4 779.2,328.9 780.3,331.2 782.5,332.2 783.7,333.8 785.6,334.8 787.3,335.9 788.2,337.8 789.6,339.3"/><polyline class="rv" points="825.1,332.2 827.1,333.1 829.4,333.5 831.6,334.0 833.5,335.2 835.7,335.7 837.8,337.4 840.6,337.7 842.8,339.3"/></g>
<g clip-path="url(#cpL2)"><polyline class="rv" points="850.0,358.8 852.2,358.7 854.0,359.6 856.0,360.2 857.9,361.1 860.1,360.9 861.9,362.2 864.0,362.3 866.0,362.4 868.0,361.8 869.9,361.2 872.1,362.0 873.9,360.8 876.0,361.3 878.0,360.6 879.5,359.0 881.2,357.7 883.4,356.9 885.0,355.3 887.2,355.5 889.2,356.8 891.5,356.6 893.8,356.7 896.0,357.1 898.1,357.9 900.2,358.6 902.4,358.8 904.6,359.7 906.8,358.8 909.0,359.3 911.2,359.3 913.3,360.6 915.6,359.7 917.8,359.7 919.9,360.6 922.1,360.0 924.3,360.4 926.5,361.1 928.6,361.1 930.8,360.9 933.0,361.3 935.2,361.2 937.4,360.6 939.5,360.1 941.7,359.7 944.0,360.5 946.2,360.1 948.2,358.8 950.5,359.5 952.7,358.9 954.9,358.8"/><polyline class="rv" points="965.3,358.8 966.5,360.8 967.6,362.7 968.8,364.6 970.0,366.5 970.6,368.7 971.5,370.7 972.3,372.8 973.7,374.5 976.1,374.7 977.2,376.9 979.6,377.1 981.2,378.5 982.8,379.8 984.7,380.7 986.7,381.2 988.8,381.2 991.0,381.2 992.8,382.3 994.8,382.6 996.8,383.3 999.1,383.4 1001.1,382.0 1003.3,381.8 1005.6,382.1 1007.6,380.5 1009.9,380.6 1012.2,380.7 1014.3,379.8 1016.4,380.6 1018.8,380.1 1021.0,380.5 1023.1,381.0 1025.1,382.6 1027.5,382.1 1029.5,383.2 1031.8,383.3 1033.9,383.3 1035.7,382.1 1037.7,381.5 1039.9,381.9 1041.8,381.0 1043.7,380.0 1045.7,379.8 1047.6,381.1 1049.8,381.6 1051.9,382.5 1054.0,383.2 1055.6,385.1 1057.5,386.3 1059.7,386.8 1061.3,388.7 1062.8,390.7 1065.4,391.6 1066.7,393.8 1068.7,395.3 1070.2,397.3 1071.5,399.5 1073.7,400.8 1075.5,402.5 1078.0,403.0 1080.0,404.3"/><polyline class="rv" points="850.0,386.8 851.8,385.5 854.0,384.7 856.0,383.8 858.3,383.3 859.8,381.4 862.2,381.2 864.0,379.8 866.0,378.3 867.8,376.6 869.5,374.8 871.0,372.8"/></g>
<g clip-path="url(#cpAB)"><polyline class="rv" points="525.1,117.0 527.9,117.8 530.8,118.4 532.8,119.1 534.7,120.1 536.5,121.2 538.0,122.5 539.0,124.4 541.1,125.1 542.1,126.9 544.2,127.5 545.8,129.1 547.8,129.8 548.9,132.5 549.2,135.4"/><polyline class="rv" points="493.9,108.5 496.1,108.9 498.0,109.8 499.6,111.3"/></g>
<g mask="url(#mk)"><polyline class="mr" points="440.3,65.0 433.6,78.5 429.1,92.0 424.6,101.0 420.1,112.3 413.3,123.5 405.4,139.3 408.8,146.0 415.6,152.8 420.1,161.8 418.9,173.1 413.3,183.0"/><polyline class="mr" points="436.9,71.8 426.8,76.3 417.8,83.0"/><polyline class="mr" points="438.1,56.0 436.5,66.1"/><polyline class="mr" points="441.4,72.9 444.8,80.8 453.8,92.0 462.8,97.0 478.6,96.5 492.1,89.8 511.0,80.8"/><polyline class="mr" points="478.6,96.5 482.0,107.8 476.3,114.5 471.8,130.3 465.1,143.8 458.3,155.1 447.1,164.1 440.3,170.8 438.1,183.0"/><polyline class="mr" points="482.0,107.8 492.1,110.0 503.4,114.5 511.0,116.8"/><polyline class="mr" points="381.8,95.4 388.5,112.3 393.0,130.3 395.3,150.6 402.0,168.6 406.5,183.0"/><polyline class="mr" points="339.0,74.0 334.5,83.0 330.0,92.0 323.3,105.5"/><polyline class="mr" points="420.1,173.1 426.8,170.8 440.3,170.8"/><polyline class="mr" points="462.8,146.0 478.6,144.9 496.6,144.9 507.9,141.5"/><polyline class="mr" points="496.6,164.1 494.3,173.1 492.1,183.0"/><polyline class="mr" points="501.1,56.0 507.9,58.3"/><polyline class="mr" points="511.0,71.8 524.5,69.5 538.0,71.8 544.8,70.0"/><polyline class="mr" points="544.8,70.0 542.5,80.8 541.4,94.3 543.6,103.3 553.8,108.9 556.0,112.3"/><polyline class="mr" points="544.8,70.0 556.0,72.9 567.3,77.4 578.5,80.8 589.8,89.8 596.5,96.5"/><polyline class="mr" points="511.0,76.3 524.5,75.1 538.0,74.0"/><polyline class="mr" points="567.3,77.4 583.0,74.0 601.0,69.5 612.3,60.5 614.6,56.0"/><polyline class="mr" points="592.0,89.8 607.8,87.5 628.1,85.3 641.6,81.9 655.1,78.5 673.1,78.5 691.1,74.0 701.0,69.5"/><polyline class="mr" points="643.8,56.0 641.6,69.5 643.8,83.0 641.6,98.8"/><polyline class="mr" points="655.1,56.0 659.6,69.5 657.3,85.3 655.1,98.8"/><polyline class="mr" points="668.6,87.5 677.6,94.3 682.1,98.8"/><polyline class="mr" points="688.8,56.0 691.1,74.0 695.6,98.8"/><polyline class="mr" points="511.0,123.5 520.0,121.3 529.0,125.8 538.0,132.5 547.0,141.5 556.0,146.0"/><polyline class="mr" points="511.0,130.3 522.3,128.0 533.5,134.8 540.3,150.6 551.5,164.1 556.0,173.1"/><polyline class="mr" points="511.0,101.0 515.5,110.0 513.3,121.3"/><polyline class="mr" points="533.5,177.6 544.8,173.1 556.0,174.2"/><polyline class="mr" points="511.0,150.6 517.8,157.3 524.5,168.6 529.0,183.0"/><polyline class="mr" points="701.0,80.8 712.3,77.4 723.5,74.0 734.8,67.3 746.0,58.3"/><polyline class="mr" points="701.0,65.0 712.3,69.5 723.5,75.1 725.8,87.5 723.5,98.8"/><polyline class="mr" points="746.0,58.3 752.8,74.0 756.2,87.5 761.8,97.6"/><polyline class="mr" points="723.5,89.8 734.8,88.6 746.0,86.4 757.3,87.5 764.0,86.4"/><polyline class="mr" points="768.5,56.0 779.8,60.5 791.0,63.9 802.3,65.0 813.6,62.8 831.6,60.5 847.3,61.6 863.1,61.6 876.6,67.3 891.0,69.5"/><polyline class="mr" points="802.3,65.0 795.6,74.0 788.8,83.0 779.8,94.3 777.5,98.8"/><polyline class="mr" points="863.1,61.6 858.6,76.3 851.8,85.3 849.6,101.0 848.5,121.3 858.6,130.3 863.1,137.0 860.8,150.6 856.3,164.1 854.1,183.0"/><polyline class="mr" points="858.6,130.3 876.6,128.0 891.0,128.0"/><polyline class="mr" points="701.0,97.6 723.5,96.5 746.0,97.6 764.0,97.6 791.0,97.2 809.1,98.8"/><polyline class="mr" points="890.0,71.8 899.0,80.8 908.0,88.6 919.3,90.9 935.0,87.5 948.5,80.8 964.3,76.3 980.0,71.8 991.3,69.5"/><polyline class="mr" points="917.0,89.8 915.9,107.8 903.5,119.0 892.3,128.0 892.3,137.0"/><polyline class="mr" points="915.9,107.8 921.5,123.5 927.1,141.5 921.5,150.6 914.8,164.1 911.4,183.0"/><polyline class="mr" points="964.3,69.5 962.0,96.5 966.5,110.0 975.5,123.5 984.6,137.0 991.3,150.6 998.1,164.1 1004.8,183.0"/><polyline class="mr" points="935.0,183.0 948.5,164.1 966.5,150.6 986.8,143.8 1007.1,132.5 1025.1,123.5 1043.1,112.3 1061.1,105.5 1080.0,101.0"/><polyline class="mr" points="1022.8,85.3 1022.8,107.8 1025.1,128.0 1034.1,132.5 1043.1,132.5"/><polyline class="mr" points="1045.3,101.0 1043.1,123.5 1040.8,146.0 1043.1,183.0"/><polyline class="mr" points="1063.3,89.8 1061.1,110.0 1070.1,123.5 1067.8,150.6 1072.4,168.6 1080.0,177.6"/><polyline class="mr" points="1025.1,87.5 1047.6,89.8 1063.3,87.5 1080.0,92.0"/><polyline class="mr" points="1067.8,80.8 1074.6,69.5 1080.0,58.3"/><polyline class="mr" points="450.9,194.7 465.1,193.1 478.6,194.3"/><polyline class="mr" points="330.5,273.0 336.8,291.1 343.5,304.6"/><polyline class="mr" points="445.9,210.0 456.1,228.0 462.8,243.8 460.6,259.5 447.1,273.0 440.3,282.1 433.6,288.8 415.6,295.6"/><polyline class="mr" points="411.0,273.0 415.6,288.8 417.8,310.0"/><polyline class="mr" points="450.9,256.2 462.8,257.3 478.6,250.5 496.6,241.5 511.0,239.3"/><polyline class="mr" points="357.0,277.6 355.9,293.3 352.5,304.6 345.8,310.0"/><polyline class="mr" points="375.0,277.6 375.0,295.6 376.2,310.0"/><polyline class="mr" points="355.9,293.3 368.3,300.1 377.3,310.0"/><polyline class="mr" points="478.6,250.5 487.6,259.5 494.3,277.6"/><polyline class="mr" points="492.1,183.0 496.6,194.3 505.6,205.5 511.0,210.0"/><polyline class="mr" points="321.0,264.0 327.8,277.6 334.5,291.1"/><polyline class="mr" points="393.0,277.6 388.5,288.8 386.3,300.1"/><polyline class="mr" points="531.3,187.5 533.5,210.0 527.9,228.0 522.3,237.0 517.8,248.3"/><polyline class="mr" points="511.0,212.3 524.5,212.3 535.8,210.0 547.0,207.8 556.0,207.8"/><polyline class="mr" points="511.0,232.5 524.5,231.4 538.0,234.8 549.3,237.0 556.0,243.8 562.8,252.8 565.0,266.3 578.5,273.0 596.5,284.3 610.1,295.6 619.1,310.0"/><polyline class="mr" points="562.8,250.5 578.5,244.9 592.0,237.0 599.9,232.5 603.3,241.5"/><polyline class="mr" points="599.9,232.5 612.3,230.3 623.6,225.8 632.6,222.4 641.6,221.3 646.1,220.1"/><polyline class="mr" points="640.4,223.5 639.3,241.5 637.1,261.8 634.8,284.3 632.6,295.6 634.8,310.0"/><polyline class="mr" points="664.1,295.6 673.1,288.8 684.3,282.1 695.6,273.0 701.0,268.5"/><polyline class="mr" points="632.6,291.1 637.1,300.1 641.6,310.0"/><polyline class="mr" points="701.0,264.0 714.5,261.8 723.5,266.3 734.8,269.7 746.0,267.4 759.5,270.8 766.3,277.6 773.0,283.2 786.5,282.1 800.1,280.9 813.6,286.6 829.3,293.3"/><polyline class="mr" points="734.8,269.7 737.0,284.3 735.9,310.0"/><polyline class="mr" points="759.5,270.8 773.0,264.0 786.5,260.7 800.1,255.0 809.1,250.5 820.3,250.5 831.6,247.2 847.3,239.3 858.6,232.5 876.6,228.0 891.0,225.8"/><polyline class="mr" points="829.3,221.3 822.6,239.3 820.3,257.3 818.1,277.6 813.6,286.6 809.1,300.1 806.8,310.0"/><polyline class="mr" points="829.3,293.3 840.6,288.8 858.6,282.1 872.1,279.8 891.0,277.6"/><polyline class="mr" points="876.6,228.0 867.6,241.5 863.1,257.3 858.6,273.0 854.1,284.3 847.3,295.6 840.6,310.0"/><polyline class="mr" points="872.1,183.0 874.3,201.0 878.8,216.8 881.1,225.8"/><polyline class="mr" points="881.1,225.8 887.9,239.3 891.0,243.8"/><polyline class="mr" points="829.3,293.3 831.6,304.6 829.3,310.0"/><polyline class="mr" points="714.5,257.3 712.3,250.5"/><polyline class="mr" points="890.0,212.3 901.3,201.0 912.5,194.3 926.0,189.8 935.0,183.0"/><polyline class="mr" points="932.8,186.4 944.0,192.0 957.5,194.3 966.5,201.0 977.8,210.0"/><polyline class="mr" points="977.8,210.0 993.6,207.8 1013.8,205.5 1038.6,201.0 1056.6,196.5 1080.0,192.0"/><polyline class="mr" points="977.8,210.0 974.4,228.0 962.0,237.0 956.4,248.3 955.3,268.5 955.3,282.1 953.0,291.1 953.0,310.0"/><polyline class="mr" points="1007.1,183.0 1013.8,196.5 1018.3,210.0 1019.4,228.0 1022.8,241.5 1027.3,255.0 1016.1,273.0 1011.6,291.1 1013.8,310.0"/><polyline class="mr" points="890.0,212.3 894.5,228.0 890.0,234.8"/><polyline class="mr" points="890.0,250.5 896.8,259.5 903.5,268.5 921.5,271.9 935.0,277.6 946.3,288.8 957.5,291.1 980.0,292.2 984.6,302.3 986.8,310.0"/><polyline class="mr" points="903.5,268.5 899.0,279.8 901.3,295.6 903.5,310.0"/><polyline class="mr" points="890.0,282.1 899.0,279.8"/><polyline class="mr" points="946.3,288.8 935.0,295.6 923.8,302.3 912.5,304.6 890.0,300.1"/><polyline class="mr" points="1038.6,183.0 1038.6,205.5 1043.1,219.0 1054.3,232.5 1047.6,248.3 1052.1,264.0 1056.6,282.1 1056.6,300.1 1061.1,310.0"/><polyline class="mr" points="1054.3,232.5 1036.3,250.5 1027.3,268.5"/><polyline class="mr" points="1080.0,205.5 1074.6,219.0 1063.3,228.0 1056.6,237.0"/><polyline class="mr" points="1047.6,259.5 1058.8,273.0 1070.1,286.6 1080.0,295.6"/><polyline class="mr" points="341.3,310.0 330.0,316.8 325.5,328.0 321.0,337.0"/><polyline class="mr" points="325.5,330.3 334.5,337.0 348.0,339.3 357.0,346.0 377.3,347.1 388.5,348.3 402.0,357.3 411.0,368.5 417.8,370.8"/><polyline class="mr" points="375.0,310.0 376.2,328.0 375.0,346.0 377.3,359.5 384.0,368.5 377.3,377.5"/><polyline class="mr" points="415.6,310.0 413.3,323.5 406.5,332.5 406.5,348.3 413.3,357.3 417.8,370.8"/><polyline class="mr" points="413.3,323.5 422.3,330.3 429.1,332.5 442.6,339.3 456.1,341.5 478.6,343.8 501.1,341.5 511.0,339.3"/><polyline class="mr" points="417.8,370.8 429.1,364.0 447.1,359.5 460.6,359.5 469.6,364.0 476.3,355.0 478.6,343.8"/><polyline class="mr" points="442.6,339.3 451.6,357.3"/><polyline class="mr" points="469.6,364.0 476.3,375.3 480.8,393.3"/><polyline class="mr" points="476.3,375.3 492.1,375.3 503.4,384.3"/><polyline class="mr" points="321.0,355.0 334.5,361.8 354.8,370.8 377.3,377.5 393.0,384.3 411.0,393.3 424.6,402.3 433.6,411.3 447.1,422.6 456.1,431.6 460.6,437.0"/><polyline class="mr" points="417.8,370.8 413.3,382.0 408.8,388.8 411.0,395.5 402.0,400.0 400.9,413.6"/><polyline class="mr" points="413.3,382.0 422.3,382.0 429.1,388.8 431.3,395.5"/><polyline class="mr" points="395.3,359.5 388.5,368.5 384.0,375.3"/><polyline class="mr" points="456.1,431.6 467.3,437.0"/><polyline class="mr" points="511.0,339.3 533.5,339.3 556.0,341.5 569.5,348.3 576.3,359.5 587.5,370.8 601.0,379.8 612.3,384.3 623.6,388.8 634.8,393.3 650.6,397.8 664.1,404.6 673.1,413.6 682.1,427.1 686.6,437.0"/><polyline class="mr" points="574.0,350.5 587.5,341.5 598.8,332.5 605.6,328.0 619.1,325.8 632.6,328.0"/><polyline class="mr" points="634.8,328.0 641.6,339.3 639.3,350.5 639.3,368.5 632.6,379.8 623.6,388.8 616.8,395.5 614.6,402.3"/><polyline class="mr" points="637.1,310.0 632.6,314.5 623.6,310.0"/><polyline class="mr" points="641.6,319.0 650.6,314.5 661.8,312.3"/><polyline class="mr" points="643.8,337.0 655.1,341.5 666.3,348.3 679.8,355.0 691.1,364.0 701.0,370.8"/><polyline class="mr" points="677.6,310.0 691.1,321.3 701.0,325.8"/><polyline class="mr" points="511.0,384.3 515.5,395.5 524.5,411.3 522.3,422.6 520.0,437.0"/><polyline class="mr" points="511.0,323.5 520.0,319.0 529.0,310.0"/><polyline class="mr" points="734.8,310.0 737.0,323.5 741.5,348.3 746.0,364.0 748.3,377.5 749.4,395.5 748.3,409.1 746.0,420.3 741.5,437.0"/><polyline class="mr" points="701.0,325.8 710.0,325.8 723.5,330.3 737.0,331.4 752.8,323.5 768.5,320.1 791.0,320.1 809.1,319.0 827.1,316.8 845.1,319.0 858.6,316.8"/><polyline class="mr" points="797.8,310.0 791.0,319.0 788.8,334.8 786.5,350.5 779.8,364.0 775.3,377.5 770.8,391.0 768.5,404.6 766.3,415.8"/><polyline class="mr" points="829.3,310.0 824.8,321.3 815.8,339.3 811.3,350.5 804.6,368.5 802.3,382.0 797.8,395.5 795.6,404.6"/><polyline class="mr" points="701.0,368.5 714.5,364.0 728.0,357.3 741.5,348.3 759.5,352.8 775.3,355.0 791.0,350.5 804.6,348.3 813.6,350.5 827.1,353.9 840.6,357.3 849.6,357.3 858.6,366.3 869.8,370.8 891.0,368.5"/><polyline class="mr" points="701.0,375.3 710.0,382.0 723.5,391.0 734.8,402.3 746.0,406.8 755.0,409.1 768.5,409.1 779.8,406.8 791.0,404.6 802.3,402.3 813.6,401.2 827.1,400.0 842.8,400.0 858.6,404.6 872.1,409.1 891.0,411.3"/><polyline class="mr" points="721.3,386.5 737.0,379.8 750.5,375.3 768.5,377.5 779.8,379.8 795.6,384.3 813.6,382.0 827.1,382.0 840.6,386.5"/><polyline class="mr" points="833.8,314.5 842.8,328.0 849.6,343.8 849.6,357.3"/><polyline class="mr" points="858.6,366.3 856.3,382.0 851.8,395.5 847.3,404.6 842.8,422.6 840.6,437.0"/><polyline class="mr" points="845.1,310.0 858.6,323.5 876.6,334.8 891.0,339.3"/><polyline class="mr" points="891.0,352.8 881.1,368.5 876.6,384.3 874.3,400.0 872.1,413.6 872.1,427.1 876.6,437.0"/><polyline class="mr" points="728.0,395.5 728.0,409.1 741.5,427.1 746.0,437.0"/><polyline class="mr" points="701.0,427.1 723.5,424.8 741.5,420.3 748.3,415.8"/><polyline class="mr" points="768.5,409.1 768.5,422.6 770.8,437.0"/><polyline class="mr" points="791.0,404.6 793.3,422.6 795.6,437.0"/><polyline class="mr" points="903.5,310.0 896.8,323.5 892.3,337.0 890.0,346.0"/><polyline class="mr" points="890.0,350.5 903.5,351.6 919.3,352.8 935.0,353.9 950.8,355.0 964.3,355.0 975.5,350.5 984.6,339.3 989.1,323.5 986.8,310.0"/><polyline class="mr" points="953.0,310.0 946.3,323.5 944.0,337.0 948.5,355.0 953.0,364.0 962.0,368.5 971.0,370.8 980.0,370.8"/><polyline class="mr" points="890.0,368.5 908.0,366.3 923.8,368.5 941.8,369.7 950.8,366.3 957.5,364.0"/><polyline class="mr" points="950.8,366.3 946.3,382.0 939.5,391.0 937.3,404.6 935.0,422.6 937.3,437.0"/><polyline class="mr" points="890.0,406.8 903.5,404.6 917.0,402.3 935.0,402.3 948.5,404.6 962.0,406.8 975.5,409.1 984.6,411.3 995.8,411.3 1007.1,412.4 1018.3,413.6 1029.6,415.8 1047.6,415.8 1061.1,413.6 1080.0,411.3"/><polyline class="mr" points="964.3,355.0 971.0,366.3 975.5,377.5 984.6,388.8 993.6,395.5 1007.1,400.0"/><polyline class="mr" points="980.0,370.8 993.6,377.5 1007.1,377.5 1020.6,377.5 1034.1,373.0 1047.6,368.5 1061.1,370.8 1080.0,366.3"/><polyline class="mr" points="1002.6,321.3 1016.1,323.5 1025.1,328.0 1034.1,343.8 1045.3,361.8 1052.1,373.0 1054.3,382.0 1052.1,395.5 1054.3,411.3 1056.6,437.0"/><polyline class="mr" points="1016.1,323.5 1029.6,321.3 1047.6,316.8 1061.1,314.5 1080.0,310.0"/><polyline class="mr" points="1070.1,310.0 1067.8,328.0 1072.4,337.0 1076.9,355.0 1074.6,377.5 1076.9,400.0 1074.6,422.6 1076.9,437.0"/><polyline class="mr" points="1007.1,400.0 1016.1,413.6 1022.8,422.6 1025.1,437.0"/><polyline class="mr" points="984.6,411.3 984.6,422.6 980.0,437.0"/><polyline class="mr" points="1007.1,400.0 1025.1,404.6 1038.6,395.5 1052.1,388.8 1065.6,384.3 1080.0,379.8"/><polyline class="mr" points="1022.8,382.0 1020.6,400.0 1018.3,413.6"/><polyline class="mr" points="890.0,431.6 903.5,431.6 917.0,427.1"/></g>
<g clip-path="url(#cpE2)"><polyline class="mr" points="321.0,206.9 330.6,205.3 341.7,206.9 348.1,206.9 357.7,205.3 365.7,203.7 367.3,199.0 373.6,192.6 383.2,188.6 391.2,192.6 396.0,195.8 403.9,199.0 410.3,202.1 416.7,202.9 424.7,199.0 435.9,195.8 442.2,194.2 451.0,192.6"/><polyline class="mr" points="407.1,183.0 405.5,189.4 403.9,199.0 400.8,206.9 396.0,214.9 389.6,221.3 384.8,226.1 381.6,232.4 375.2,240.4 368.9,246.8"/><polyline class="mr" points="365.7,203.7 364.1,214.9 363.3,224.5 364.1,234.0 367.3,237.2"/><polyline class="mr" points="348.1,206.9 349.7,219.7 356.1,229.3 362.5,234.0"/><polyline class="mr" points="341.7,206.9 340.1,218.1 338.5,230.9 337.0,246.8 333.8,262.8 330.6,273.0"/><polyline class="mr" points="321.0,230.9 330.6,229.3 338.5,230.9 348.1,232.4 357.7,235.6 364.1,237.2"/><polyline class="mr" points="321.0,246.8 330.6,248.4 340.1,246.8 352.9,246.8 362.5,243.6"/><polyline class="mr" points="389.6,219.7 397.6,218.1 407.1,216.5 416.7,214.9 429.5,211.7 442.2,208.5"/><polyline class="mr" points="411.9,232.4 423.1,226.1 432.7,221.3 442.2,216.5 445.4,211.7"/><polyline class="mr" points="445.4,206.9 445.4,222.9 442.2,232.4 435.9,240.4 429.5,246.8 419.9,250.0 410.3,253.2 400.8,253.2 391.2,250.0 383.2,246.8"/><polyline class="mr" points="375.2,240.4 375.2,253.2 373.6,262.8 372.0,273.0"/><polyline class="mr" points="383.2,246.8 389.6,253.2 396.0,258.0 399.2,265.9 400.8,273.0"/><polyline class="mr" points="399.2,237.2 399.2,250.0 397.6,259.6 391.2,269.1"/><polyline class="mr" points="356.1,237.2 354.5,250.0 359.3,259.6 360.9,273.0"/><polyline class="mr" points="376.8,254.8 367.3,258.0 360.9,262.8 359.3,273.0"/><polyline class="mr" points="435.9,243.6 435.9,256.4 440.6,265.9 445.4,273.0"/><polyline class="mr" points="442.2,258.0 451.0,254.8"/><polyline class="mr" points="384.8,226.1 391.2,234.0 399.2,238.8 400.8,246.8"/><polyline class="mr" points="439.0,183.0 437.4,192.6 442.2,202.1 443.8,206.9"/><polyline class="mr" points="396.0,214.9 386.4,218.1 383.2,226.1 388.0,230.9"/><polyline class="mr" points="407.1,251.6 410.3,259.6 411.9,273.0"/><polyline class="mr" points="367.3,237.2 373.6,235.6 380.0,235.6 383.2,242.0"/></g>
<g clip-path="url(#cpG2)"><polyline class="mr" points="701.0,266.6 711.6,263.0 720.5,266.6 734.7,271.0 747.1,268.4 757.7,271.9 763.0,278.1 768.4,282.5 777.2,284.3 789.6,283.4 803.8,280.8 809.1,282.5 814.4,287.9 825.1,288.7 835.7,287.9 842.8,289.6 851.7,286.1 857.0,282.5 869.4,282.5 891.0,281.7"/><polyline class="mr" points="734.7,271.0 738.2,286.1 736.4,302.0 734.7,318.0 736.4,332.2 738.2,340.0"/><polyline class="mr" points="757.7,271.9 771.9,266.6 789.6,261.3 803.8,256.0 818.0,250.6 835.7,245.3 848.1,240.0"/><polyline class="mr" points="821.5,240.0 819.8,250.6 823.3,263.0 818.0,279.0 812.7,287.9 807.3,298.5 802.0,307.4 793.2,316.2 789.6,326.8 789.6,340.0"/><polyline class="mr" points="814.4,287.9 823.3,296.7 828.6,305.6 825.1,318.0 821.5,328.6 816.2,340.0"/><polyline class="mr" points="835.7,287.9 835.7,296.7 828.6,305.6"/><polyline class="mr" points="837.5,296.7 842.8,307.4 849.9,316.2 860.5,323.3 871.2,330.4 881.8,335.7 891.0,337.5"/><polyline class="mr" points="869.4,240.0 864.1,254.2 860.5,266.6 857.0,282.5"/><polyline class="mr" points="891.0,291.4 880.0,294.9 872.9,302.0 869.4,310.9"/><polyline class="mr" points="701.0,326.8 711.6,325.1 722.3,328.6 736.4,332.2 747.1,325.1 761.3,319.8 777.2,321.5 793.2,321.5 807.3,319.8 821.5,318.0 835.7,318.0 853.4,316.2"/><polyline class="mr" points="713.4,256.0 715.2,263.0 706.3,266.6 701.0,270.1"/><polyline class="mr" points="828.6,305.6 835.7,318.0 842.8,328.6 846.3,340.0"/><polyline class="mr" points="887.1,240.0 891.0,247.1"/></g>
<g clip-path="url(#cpL2)"><polyline class="mr" points="864.0,240.0 857.0,261.0 850.0,281.9"/><polyline class="mr" points="888.4,240.0 898.9,254.0 902.4,268.0 898.9,285.4 902.4,309.9 891.9,337.9 881.5,365.8 874.5,393.8 871.0,414.8 874.5,437.1"/><polyline class="mr" points="850.0,281.9 878.0,278.4 902.4,268.0 919.9,271.5 940.9,281.9 954.9,292.4"/><polyline class="mr" points="954.9,240.0 954.9,292.4 951.4,320.4 944.4,330.9 947.9,351.8 954.9,358.8"/><polyline class="mr" points="954.9,292.4 982.8,292.4 989.8,309.9 986.3,327.4 972.3,344.9 961.8,358.8"/><polyline class="mr" points="850.0,316.9 871.0,327.4 891.9,337.9"/><polyline class="mr" points="850.0,302.9 871.0,299.4 891.9,299.4 905.9,292.4"/><polyline class="mr" points="902.4,309.9 919.9,302.9 944.4,295.9"/><polyline class="mr" points="850.0,355.3 871.0,351.8 891.9,351.8 919.9,353.6 947.9,355.3 954.9,358.8"/><polyline class="mr" points="850.0,372.8 871.0,369.3 898.9,365.8 926.9,365.8 954.9,365.8"/><polyline class="mr" points="961.8,358.8 975.8,362.3 989.8,372.8 1003.8,379.8 1024.8,376.3 1045.7,372.8 1066.7,369.3 1080.0,365.8"/><polyline class="mr" points="965.3,365.8 975.8,379.8 989.8,386.8 1003.8,390.3 1017.8,393.8"/><polyline class="mr" points="996.8,320.4 1017.8,323.9 1038.7,320.4 1059.7,313.4 1080.0,309.9"/><polyline class="mr" points="1000.3,320.4 989.8,344.9 979.3,358.8"/><polyline class="mr" points="1017.8,254.0 1014.3,285.4 1003.8,320.4"/><polyline class="mr" points="1024.8,261.0 1031.8,281.9 1045.7,299.4 1052.7,320.4 1059.7,344.9 1063.2,365.8 1056.2,386.8 1052.7,414.8 1049.2,437.1"/><polyline class="mr" points="1045.7,240.0 1052.7,261.0 1066.7,278.4 1080.0,288.9"/><polyline class="mr" points="1073.7,302.9 1066.7,330.9 1070.2,355.3 1066.7,386.8 1059.7,414.8"/><polyline class="mr" points="850.0,404.3 878.0,402.5 905.9,402.5 937.4,404.3 965.3,406.0 996.8,407.8 1024.8,411.3 1052.7,411.3 1080.0,407.8"/><polyline class="mr" points="937.4,404.3 940.9,421.8 937.4,437.1"/><polyline class="mr" points="982.8,407.8 986.3,425.2 982.8,437.1"/><polyline class="mr" points="954.9,365.8 940.9,386.8 933.9,404.3 930.4,425.2"/><polyline class="mr" points="864.0,372.8 864.0,393.8 850.0,414.8"/><polyline class="mr" points="1009.0,400.8 996.8,411.3 993.3,428.7"/><polyline class="mr" points="1009.0,400.8 1031.8,393.8 1049.2,386.8"/><polyline class="mr" points="1080.0,330.9 1066.7,337.9 1049.2,344.9"/><polyline class="mr" points="895.4,437.1 909.4,414.8 919.9,404.3"/></g>
<g clip-path="url(#cpAB)"><polyline class="mr" points="440.0,74.4 444.3,81.5 448.5,88.6 455.6,94.3 462.7,97.1 471.2,96.4 478.3,97.1 486.8,92.9 496.7,87.2 503.8,83.0 510.9,80.8 519.4,80.1 527.9,77.3 536.5,74.4 545.0,72.3 553.5,71.6 560.0,71.6"/><polyline class="mr" points="478.3,97.1 481.1,105.6 482.6,108.5 476.9,115.6 472.6,124.1 469.8,136.0"/><polyline class="mr" points="482.6,108.5 489.6,107.1 496.7,109.9 502.4,114.2 508.1,119.8 512.3,124.1"/><polyline class="mr" points="510.9,88.6 512.3,98.6 510.9,107.1 511.6,118.4 512.3,124.1"/><polyline class="mr" points="512.3,124.1 519.4,122.7 527.9,121.2 532.2,115.6 539.3,108.5 543.5,101.4 542.1,91.5 545.0,81.5 546.4,74.4 545.0,70.2"/><polyline class="mr" points="512.3,124.1 516.6,129.8 525.1,132.6 532.2,136.0"/><polyline class="mr" points="508.1,136.0 512.3,129.8 519.4,125.5 525.1,124.1 529.4,126.9 536.5,132.6"/><polyline class="mr" points="510.9,80.1 509.5,71.6 513.8,65.9 519.4,61.7 522.3,57.4"/><polyline class="mr" points="543.5,101.4 547.8,105.6 553.5,107.1 560.0,104.2"/><polyline class="mr" points="519.4,61.7 527.9,64.5 539.3,67.3 545.0,70.2"/><polyline class="mr" points="545.0,70.2 550.6,74.4 560.0,73.0"/><polyline class="mr" points="550.6,56.0 552.1,61.7 549.2,70.2"/><polyline class="mr" points="496.7,56.0 501.0,58.1 505.2,57.4"/><polyline class="mr" points="510.9,88.6 516.6,85.8"/></g>
<g mask="url(#mk)"><polyline class="gb" points="375.0,70.6 375.6,69.1 375.6,67.4 377.2,66.1 377.5,64.5 377.3,62.8 379.1,61.9 379.2,59.7 380.1,58.1 381.8,57.1"/><polyline class="gb" points="431.3,85.3 431.7,83.5 433.2,82.7 434.5,81.6 435.1,80.1 435.8,78.5 437.0,77.5 438.1,76.3 439.2,75.1 440.3,74.0 441.4,72.8 442.6,71.6 443.3,70.2 443.5,68.3 445.5,67.9 445.8,66.0 447.1,65.0 448.1,63.7 448.7,62.2 450.1,61.2 450.2,59.3 451.6,58.3 453.4,58.4 455.1,58.9 456.8,59.3 458.3,60.5 459.1,62.3 460.8,63.2 462.4,64.1 463.6,65.5 464.1,67.6 466.0,68.2 467.3,69.5 468.4,68.2 470.3,68.2 471.5,67.0 473.2,66.6 474.1,65.0 474.7,63.2 476.3,62.3 477.9,61.4 479.1,60.2 480.3,58.9 480.8,57.1 482.9,57.2 484.4,58.5 486.2,59.0 487.6,60.5 489.2,61.0 489.7,63.1 491.4,63.5 492.3,65.0 494.2,65.1 494.9,66.8 496.6,67.3 498.2,67.0 499.8,66.6 501.4,67.4 503.1,67.6 504.5,65.9 506.2,66.7 507.8,66.6 509.4,65.7 511.0,66.1"/><polyline class="gb" points="431.3,85.3 431.0,87.6 430.2,89.8 432.1,89.1 433.9,89.2 435.8,89.8 437.1,91.3 437.3,93.2 438.1,95.0 439.2,96.5 439.2,98.3 439.1,100.0 438.0,101.4 437.0,102.9 437.3,104.7 436.6,106.3 435.8,107.8 436.9,109.3 436.4,111.3 437.4,112.9 438.8,114.3 439.3,116.0 439.4,117.8 439.7,119.6 440.3,121.3 441.1,122.7 442.8,123.4 443.7,124.8 443.9,126.6 445.3,127.6 446.4,128.8 447.1,130.3 448.8,129.9 450.4,131.1 452.1,130.0 453.8,130.4 455.5,130.0 457.2,130.1 458.9,130.9 460.6,130.3 462.1,129.2 461.9,127.2 462.3,125.5 463.9,124.5 463.9,122.5 465.1,121.3 466.8,120.4 468.5,122.0 470.1,121.1 471.8,121.9 473.5,121.1 475.2,122.0 476.9,121.2 478.6,121.3 479.5,119.7 480.7,118.4 482.7,118.0 484.2,117.0 485.3,115.7 485.9,117.5 488.2,117.8 488.6,119.7 490.0,120.8 491.0,122.2 492.1,123.5 493.8,123.9 495.0,125.0 496.1,126.3 497.1,127.8 498.8,128.0 500.1,129.5 500.0,131.4 500.0,133.3 500.3,135.1 502.2,136.3 502.9,138.0 502.0,140.1 503.4,141.5 501.5,141.7 500.7,143.4 499.7,144.9 497.5,144.5 496.6,146.0 496.2,147.8 494.8,149.2 494.7,151.0 493.8,152.6 494.4,154.7 492.7,156.0 493.1,158.0 492.1,159.6 491.5,161.1 490.0,162.3 489.3,163.8 489.6,165.8 488.8,167.3 487.6,168.6 487.5,170.2 487.1,171.8 487.0,173.4 487.3,175.1 486.8,176.6 485.7,178.1 485.1,179.7 486.4,181.5 485.3,183.0"/><polyline class="gb" points="375.0,149.4 376.6,149.0 378.2,148.7 379.2,147.0 381.2,147.7 382.3,146.0 384.0,146.0 385.0,144.7 385.8,143.3 386.8,141.9 387.1,140.2 388.1,138.9 389.2,137.7 389.8,136.1 390.8,134.8"/><polyline class="gb" points="321.0,164.1 322.5,165.4 324.4,166.3"/><polyline class="gb" points="511.0,65.0 512.6,64.3 514.2,63.6 515.5,62.3 517.5,62.6 519.0,61.8 520.5,60.7 522.3,60.5 523.9,60.8 525.5,60.7 527.1,59.9 528.6,59.3 530.3,59.7 531.8,58.8 533.5,59.4 535.5,59.2 537.1,60.2 539.1,60.0 540.7,61.1 542.5,61.6"/><polyline class="gb" points="804.6,60.5 806.1,60.0 807.3,58.6 809.1,59.0 810.3,57.5 812.2,58.1 813.6,57.1 815.2,57.9 816.9,57.7 818.8,57.2 820.3,58.3 818.8,59.0 817.4,59.9 815.8,60.5 813.8,60.2 812.4,62.0 810.3,61.2 808.4,61.4 806.8,62.8 805.3,63.4 803.9,64.2 803.3,66.1 801.1,65.9 800.4,67.6 798.6,67.9 797.8,69.5 796.3,70.5 796.6,72.6 794.8,73.5 793.8,74.7 794.3,76.9 793.0,78.1 791.5,79.1 791.0,80.8 790.0,82.7 787.5,83.3 786.5,85.3 787.8,86.4 787.9,88.3 789.8,89.0 790.1,90.7 791.0,92.0 792.8,91.7 793.5,89.8 794.9,89.0 796.5,88.4 797.8,87.5 799.5,86.8 801.2,85.8 803.1,85.6 804.9,85.1 806.8,85.3 808.7,85.4 810.3,84.4 812.1,84.3 813.6,83.0 815.2,82.0 817.3,82.6 818.8,81.0 820.8,81.3 822.6,80.8 824.0,81.7 825.7,82.0 826.8,83.6 828.5,83.9 830.0,84.6 831.6,85.3 832.6,87.3 835.1,87.8 836.1,89.8 835.7,91.6 836.8,93.0 837.6,94.4 837.4,96.2 838.3,97.6"/><polyline class="gb" points="842.8,166.3 844.7,166.5 845.9,168.3 847.8,168.1 849.6,168.6 849.8,170.4 849.1,172.2 849.7,174.0 850.2,175.8 849.6,177.6 851.5,177.5 853.0,175.9 855.1,176.8 856.7,175.3 858.6,175.3 859.1,173.7 860.0,172.1 859.6,170.3 860.0,168.6 859.7,166.8 859.4,165.0 859.7,163.4 860.8,161.8 861.7,160.0 863.7,159.3 864.8,157.7 866.3,156.4 867.6,155.1 869.1,156.3 871.2,155.6 872.8,156.3 874.3,157.3 875.0,158.8 876.9,159.5 877.8,160.9 878.2,162.6 878.8,164.1 880.8,164.0 882.3,164.9 884.1,165.3 885.6,166.3 886.9,167.6 888.2,168.7 890.0,169.3 891.0,170.8"/><polyline class="gb" points="890.0,170.8 891.1,169.6 891.8,168.1 892.2,166.4 894.3,165.8 894.1,163.8 894.9,162.4 895.7,161.0 897.4,160.1 898.7,159.0 899.0,157.3 900.4,156.4 900.9,154.7 901.7,153.3 902.3,151.8 904.2,151.2 905.1,149.9 905.8,148.4 907.2,147.5 908.0,146.0 910.2,145.4 912.5,144.9 913.8,146.5 915.7,147.0 917.8,147.1 919.3,148.3 921.1,149.0 922.9,147.5 924.7,148.4 926.5,148.1 928.3,148.3 929.0,146.7 929.9,145.2 932.0,144.7 932.1,142.5 934.0,141.8 935.0,140.4 936.4,142.0 938.7,141.5 940.3,142.5 941.8,143.8 943.5,144.4 945.4,144.7 947.1,145.4 948.8,146.1 950.8,146.0 952.5,146.5 953.7,147.6 955.0,148.5 956.6,149.0 957.5,150.6 956.6,152.1 956.5,153.8 956.3,155.6 957.3,157.5 955.5,158.9 955.4,160.6 955.6,162.4 955.3,164.1 954.1,165.4 953.9,167.1 953.5,168.8 952.9,170.4 952.0,171.8 950.8,173.1 952.6,173.3 953.6,174.6 954.6,176.1 956.0,177.0 957.5,177.6 959.1,178.3 960.7,178.3 962.4,177.6 964.0,178.3 965.6,178.3 967.1,179.0 968.8,178.7 969.5,180.1 970.7,181.3 971.0,183.0"/><polyline class="gb" points="483.1,183.0 482.3,184.6 481.2,186.1 481.9,188.2 480.2,189.5 481.1,191.7 480.1,193.3 479.6,195.0 478.6,196.5 479.9,197.7 481.2,198.7 482.9,199.2 484.7,199.2 485.8,200.9 487.6,201.0 488.8,202.1 489.9,203.3 489.9,205.3 491.3,206.3 492.1,207.7 493.1,208.9 494.3,210.0 494.2,211.9 495.7,213.2 495.7,215.1 496.6,216.6 497.0,218.3 498.3,219.6 498.8,221.3 500.2,222.2 501.8,222.5 503.5,222.6 505.1,223.0 506.4,224.3 508.2,223.9 509.2,225.9 511.0,225.8"/><polyline class="gb" points="511.0,228.0 510.4,229.8 509.5,231.3 508.3,232.5 506.1,232.9 505.6,234.8 505.3,236.6 505.1,238.4 504.7,240.1 503.4,241.5 503.3,243.4 501.5,244.4 500.9,245.9 500.0,247.4 499.2,248.8 498.8,250.5 498.8,252.4 497.2,253.5 496.8,255.1 495.3,256.3 494.6,257.8 494.3,259.5 493.0,260.9 493.8,263.0 491.8,264.1 491.1,265.7 490.4,267.3 491.1,269.5 489.8,270.8 490.7,272.3 491.2,273.9 491.6,275.5 490.5,277.4 490.9,278.9 491.5,280.5 492.1,282.1 492.6,283.7 493.8,284.8 495.3,285.7 496.5,286.8 497.5,288.1 497.5,290.1 498.8,291.1 500.5,291.5 501.7,292.6 503.0,293.6 504.7,293.9 505.6,295.6 506.1,293.8 507.1,292.4 508.6,291.3 509.0,289.4 509.8,287.9 511.0,286.6"/><polyline class="gb" points="511.0,286.6 512.6,287.7 514.4,287.1 516.0,288.0 517.7,287.9 519.6,287.1 521.2,288.1 522.8,288.4 524.5,288.8 525.9,289.9 527.8,289.8 529.2,291.1 530.9,291.4 532.7,291.6 533.9,293.3 535.8,293.3 537.2,294.3 537.0,296.4 538.8,297.2 539.9,298.5 540.4,300.1 540.4,302.0 540.9,303.6 542.5,304.6 544.1,306.0 544.0,308.2 544.8,310.0"/><polyline class="gb" points="525.6,250.5 527.0,249.5 528.7,249.0 529.4,247.1 531.1,246.5 532.4,245.3 534.2,245.0 535.0,243.2 537.1,243.2 538.0,241.5"/><polyline class="gb" points="587.5,268.5 589.2,269.2 590.8,270.0 591.9,271.7 593.5,272.3 595.4,272.6 596.5,274.2 598.1,273.2 598.8,271.3 600.9,271.2 602.2,269.9 603.3,268.5"/><polyline class="gb" points="628.1,232.5 629.8,232.1 631.2,231.0 632.4,229.7 634.0,228.9 635.5,228.0 637.4,227.9 638.2,225.8 640.4,226.1 641.6,224.6"/><polyline class="gb" points="691.1,221.3 693.1,222.0 694.2,223.6 695.5,225.0 696.0,227.2 697.9,228.0"/><polyline class="gb" points="707.8,219.0 708.1,220.6 708.6,222.2 708.0,224.0 709.5,225.4 709.4,227.0 709.6,228.7 710.0,230.3 711.3,231.4 712.8,232.2 714.4,232.8 716.1,233.0 717.6,233.7 719.0,234.8 720.4,233.7 722.4,234.4 723.9,233.6 725.6,233.3 726.9,231.8 728.6,231.8 730.3,231.4 732.1,231.0 733.5,229.9 734.8,228.4 736.7,228.1 738.6,228.0 739.7,226.2 741.5,225.8 741.6,223.9 742.3,222.3 743.6,220.8 743.8,219.0"/><polyline class="gb" points="968.8,183.0 967.5,184.2 967.8,186.3 966.5,187.5 965.0,188.7 963.3,189.1 961.6,189.5 959.8,189.8 959.9,191.4 960.7,192.9 960.6,194.5 961.0,196.1 959.7,197.9 960.3,199.4 960.9,201.0 960.8,202.9 958.6,203.9 959.1,206.2 957.9,207.5 956.1,208.7 955.6,210.4 955.3,212.3 954.0,213.3 953.4,214.8 952.7,216.4 951.1,217.1 950.8,219.0 949.7,220.1 948.4,221.1 947.9,222.8 946.3,223.5 945.1,224.9 943.3,225.7 942.2,227.1 941.1,228.7 939.7,229.8 938.6,231.3 937.3,232.5 937.6,234.3 936.4,235.7 936.5,237.4 935.6,238.9 934.9,240.4 935.5,242.2 935.0,243.8 935.5,245.5 935.7,247.3 936.8,248.8 937.3,250.5 938.8,249.5 940.8,249.8 942.6,249.5 944.0,248.3 945.2,247.0 945.9,245.4 946.8,244.1 947.3,242.4 948.0,240.9 948.5,239.3 950.2,238.4 951.8,237.3 953.7,237.0 955.3,235.9 957.1,235.5 958.7,236.3 960.3,237.2 962.0,237.0 963.7,236.6 965.1,235.7 966.5,234.8 967.5,236.3 967.8,238.1 968.3,239.8 968.8,241.5 968.7,243.2 969.2,244.9 968.9,246.6 968.6,248.4 970.1,249.9 969.4,251.7 969.3,253.4 969.9,255.0 970.0,256.7 969.7,258.4 968.6,260.0 970.2,261.9 969.1,263.5 969.7,265.2 968.4,266.8 968.8,268.5 970.2,269.9 972.2,269.7 974.1,269.6 975.5,270.8 976.9,269.8 978.2,268.6 979.7,267.7 980.7,266.3 982.1,265.4 983.7,264.5 984.6,262.9 986.3,262.4 987.9,261.6 989.9,262.0 991.3,260.7 993.0,260.3 994.5,261.3 996.1,261.0 997.7,261.8 999.4,260.8 1000.9,262.5 1002.6,261.8 1004.2,262.3 1005.9,262.6 1007.1,264.0 1005.9,265.8 1004.2,267.2 1002.6,268.5 1003.4,270.3 1002.7,272.1 1002.7,274.0 1002.2,275.8 1002.6,277.6 1003.7,278.7 1004.8,279.9 1005.9,281.1 1006.1,283.0 1006.8,284.5 1008.3,285.3 1009.3,286.6 1009.5,288.3 1008.2,289.8 1008.7,291.7 1008.7,293.4 1008.6,295.1 1007.1,296.6 1006.8,298.3 1007.1,300.1 1005.6,300.8 1004.4,301.9 1003.0,302.7 1001.9,304.1 1000.3,304.6 998.8,306.0 999.1,308.3 998.1,310.0"/><polyline class="gb" points="1007.1,264.0 1008.6,263.4 1010.2,262.8 1011.6,262.0 1012.7,260.6 1013.9,259.5 1015.6,259.1 1016.6,257.6 1018.3,257.3 1019.0,255.6 1018.3,253.8 1019.3,252.1 1018.4,250.3 1018.7,248.5 1018.6,246.8 1019.1,245.0 1018.8,243.2 1019.4,241.5 1018.7,239.8 1020.2,238.4 1019.5,236.7 1019.6,235.1 1019.9,233.5 1020.4,231.9 1020.6,230.3 1022.4,230.4 1024.1,231.0 1025.9,231.2 1027.8,230.9 1029.6,231.4 1031.5,231.9 1033.3,231.6 1034.9,229.9 1036.9,231.1 1038.6,230.3 1039.8,231.7 1041.4,232.2 1043.4,231.9 1044.3,233.8 1046.0,234.2 1047.6,234.8 1049.6,234.4 1051.4,234.8 1052.8,236.9 1054.7,236.9 1056.6,237.0 1057.4,238.5 1057.9,240.1 1058.2,241.7 1058.3,243.4 1057.7,245.2 1058.8,246.6 1058.8,248.3 1060.5,249.6 1061.1,251.7 1062.9,252.4 1064.7,252.2 1066.5,251.1 1068.3,252.4 1070.1,251.7 1071.6,250.7 1073.1,249.8 1074.3,248.5 1076.0,247.7 1076.9,246.0 1077.0,244.3 1076.8,242.7 1075.4,241.3 1075.9,239.5 1075.3,238.0 1075.4,236.3 1074.6,234.8 1075.1,233.1 1076.4,231.6 1076.4,229.7 1076.9,228.0 1075.0,227.9 1073.3,227.4 1071.6,227.0 1070.1,225.8 1068.6,224.3 1066.5,223.3 1065.6,221.3 1066.9,220.3 1067.9,218.9 1069.6,218.6 1071.0,217.7 1072.4,216.8 1074.3,216.8 1076.2,217.4 1078.1,215.9 1080.0,216.8"/><polyline class="gb" points="538.0,310.0 539.0,311.4 540.7,311.8 542.0,312.8 543.3,313.8 544.8,314.5 546.3,315.4 548.0,314.9 549.6,315.3 551.0,316.6 553.0,315.4 554.4,316.7 556.0,316.8 557.7,316.5 559.0,315.0 560.9,315.5 562.6,315.1 564.3,315.1 565.6,313.6 567.3,313.4 568.7,314.5 570.5,314.0 572.1,314.3 573.6,315.4 575.5,314.2 576.9,315.7 578.5,315.6 580.2,315.5 581.7,314.7 583.5,315.3 584.9,314.1 586.6,314.0 588.2,313.7 589.8,313.4 591.6,313.6 593.1,312.3 594.8,312.4 596.5,312.3 597.6,313.5 598.3,315.0 598.8,316.6 600.5,317.4 601.0,319.0 601.1,320.8 602.5,322.2 603.0,323.8 604.0,325.3 604.3,327.0 604.1,329.0 605.6,330.3 605.0,331.8 604.4,333.4 604.9,335.1 604.6,336.8 604.3,338.4 603.5,339.9 603.3,341.5 602.7,343.1 602.2,344.6 603.1,346.5 601.6,347.9 601.0,349.4 601.3,351.1 601.0,352.8 600.3,354.7 598.6,355.7 597.6,357.5 596.0,358.6 594.3,359.5 593.4,358.0 591.7,357.6 590.4,356.6 589.2,355.5 587.5,355.0 585.6,354.9 584.1,356.0 582.4,356.5 580.8,357.3 579.5,358.5 578.3,359.9 577.3,361.4 576.3,362.9 574.6,363.8 573.6,365.6 571.8,366.3 570.8,367.6 570.4,369.3 569.5,370.8 567.8,371.8 567.3,374.0 565.9,375.2 564.7,376.8 562.8,377.5"/><polyline class="gb" points="998.1,310.0 998.4,311.7 998.9,313.3 1000.3,314.5 1000.6,316.3 1001.7,317.8 1001.4,319.8 1002.6,321.3 1000.9,321.7 999.8,323.0 998.8,324.3 997.4,325.2 995.8,325.8 995.4,327.5 995.0,329.2 994.2,330.9 993.6,332.5 991.9,332.6 990.2,332.4 988.9,334.3 987.1,333.7 985.7,334.9 984.0,335.1 982.3,334.8 981.7,336.6 982.2,338.4 981.5,340.2 982.4,342.0 982.3,343.8 980.9,345.2 979.0,345.1 977.2,345.3 975.5,346.0 973.5,347.0 971.9,348.4 971.0,350.5 970.3,352.0 969.7,353.6 969.4,355.3 967.8,356.4 967.8,358.3 966.5,359.5 966.7,361.5 966.5,363.3 966.1,365.1 964.4,366.7 964.3,368.5 964.4,370.4 962.4,371.6 963.3,373.8 962.0,375.3 961.8,377.2 963.6,378.7 964.2,380.5 963.5,382.6 964.3,384.3 965.3,385.8 965.0,387.8 966.5,389.2 966.5,391.0 967.0,392.8 965.4,394.2 965.2,395.8 964.6,397.4 964.5,399.0 965.3,400.8 964.3,402.3 963.2,403.5 962.2,404.8 961.6,406.4 960.0,407.3 959.8,409.1 959.3,410.7 957.3,411.3 956.8,412.9 956.9,414.9 955.3,415.8 953.9,417.2 951.8,416.7 950.0,417.0 948.8,418.8 947.0,418.9 945.0,418.8 943.7,420.3 941.8,420.3 939.9,420.4 938.6,421.6 937.2,423.0 935.4,423.1 933.7,423.4 932.2,424.3 930.5,424.8 928.6,425.0 927.1,426.3 925.0,425.6 923.4,426.9 921.5,427.1 920.4,428.3 919.5,429.6 918.9,431.2 918.1,432.6 917.0,433.8"/></g>
<g clip-path="url(#cpL2)"><polyline class="gb" points="968.8,240.0 968.0,241.7 967.5,243.4 967.5,245.2 967.6,247.0 967.8,248.8 967.1,250.5 968.2,251.9 966.9,253.8 967.7,255.3 967.8,257.0 969.0,258.4 968.8,260.1 968.5,261.8 969.0,263.3 969.8,264.8 970.6,266.3 970.6,268.0 972.3,267.3 974.3,267.6 975.8,266.3 977.7,266.3 979.4,265.6 981.3,265.7 982.8,264.5 984.5,264.6 985.8,263.3 987.3,262.4 988.9,262.5 990.6,262.4 992.2,262.3 993.8,262.3 995.4,262.0 996.8,261.0 998.3,259.6 1000.5,260.4 1002.2,259.8 1004.0,259.3 1005.6,258.2 1007.3,257.5 1008.2,256.0 1010.1,255.6 1011.2,254.4 1012.2,253.1 1013.6,252.2 1014.3,250.5 1014.6,248.7 1014.7,246.8 1016.1,245.3 1017.1,243.7 1016.7,241.6 1017.8,240.0"/><polyline class="gb" points="1010.8,264.5 1009.8,266.1 1008.9,267.7 1009.5,269.9 1008.3,271.4 1007.6,273.1 1007.3,275.0 1007.7,276.5 1008.4,278.0 1008.7,279.6 1008.1,281.4 1008.4,283.0 1009.3,284.5 1010.2,285.9 1009.3,287.8 1009.7,289.3 1010.9,290.7 1010.8,292.4 1009.7,293.8 1008.2,295.0 1007.2,296.5 1006.8,298.4 1005.8,299.9 1004.7,301.3 1003.8,302.9 1003.3,304.7 1002.3,306.2 1001.3,307.7 999.5,308.7 999.0,310.5 997.7,311.8 996.8,313.4 997.6,315.1 997.9,316.9 999.1,318.4 999.9,320.1 998.9,322.4 1000.3,323.9 999.3,325.2 998.5,326.7 996.6,327.2 995.3,328.2 994.9,330.1 993.3,330.9 991.7,331.7 990.5,333.1 988.8,333.8 987.8,335.6 986.3,336.6 983.8,336.1 982.8,337.9 981.6,339.4 981.7,341.4 981.0,343.1 980.9,345.0 979.4,346.4 979.3,348.4 977.6,349.3 975.5,349.4 973.9,350.5 972.3,351.8 970.9,353.3 969.8,355.0 970.1,357.3 968.8,358.8 969.3,360.6 968.6,362.1 968.2,363.6 968.0,365.2 967.7,366.8 966.4,368.1 965.5,369.6 965.8,371.3 965.3,372.8 964.2,374.2 963.9,375.7 964.9,377.7 963.6,379.0 963.6,380.6 963.7,382.3 961.8,383.5 962.7,385.4 961.8,386.8 962.3,388.6 962.8,390.4 962.8,392.3 963.9,393.9 964.9,395.5 965.3,397.3 964.4,398.8 963.9,400.6 961.7,401.3 960.6,402.8 960.8,405.1 960.0,406.7 958.4,407.8 957.0,408.9 955.4,409.6 953.4,409.5 951.8,410.2 950.3,411.1 949.4,413.2 947.2,412.7 945.8,413.6 944.4,414.8 943.0,415.7 941.4,416.5 941.4,418.8 940.2,419.9 938.2,420.3 937.4,421.8 935.4,421.6 933.8,422.6 932.3,423.8 930.3,423.9 928.5,424.2 926.9,425.2 926.3,427.0 924.8,428.1 923.7,429.5 922.7,431.0 921.1,431.9 920.4,433.6 919.1,434.8 918.1,436.2 916.4,437.1"/><polyline class="gb" points="937.4,240.0 938.0,241.9 939.9,243.1 939.7,245.4 940.9,247.0 942.9,247.4 944.7,248.0 945.8,250.3 947.9,250.5"/><polyline class="gb" points="1056.2,240.0 1057.3,241.6 1056.6,243.7 1057.3,245.5 1057.9,247.2 1059.7,248.5 1059.7,250.5 1061.3,250.8 1063.0,250.6 1064.2,252.4 1065.8,252.6 1067.4,252.7 1069.1,252.7 1070.7,252.9 1072.0,254.2 1073.7,254.0 1075.3,253.1 1077.0,252.4 1078.1,250.8 1080.0,250.5"/></g>
<g clip-path="url(#cpAB)"><polyline class="gb" points="440.0,74.4 440.8,73.0 441.7,71.6 443.7,71.3 444.6,70.0 445.7,68.8 445.9,67.0 447.9,66.3 447.7,64.3 448.8,63.0 449.2,61.4 450.2,60.1 451.3,58.8 453.1,59.9 455.2,59.5 457.0,60.3 458.7,61.0 459.6,62.6 461.0,63.6 461.6,65.5 463.8,65.7 464.0,68.0 466.4,67.9 466.6,70.2 468.4,70.9 469.9,70.3 470.9,68.7 472.6,68.2 474.0,67.3 474.7,65.7 475.7,64.3 476.6,62.8 477.9,61.5 479.8,60.8 480.9,59.4 481.1,57.4 482.7,59.0 485.2,58.7 486.8,60.3 488.5,61.1 489.2,63.0 491.6,63.0 492.2,65.0 494.1,65.5 494.8,67.6 496.7,68.1 498.2,66.8 500.3,67.7 501.8,66.5 503.4,65.7 505.2,65.9 507.0,65.0 508.7,66.5 510.4,66.0 512.1,65.4 513.8,65.9 515.6,65.3 517.7,65.7 519.4,64.5 521.1,63.1 523.3,62.7 525.1,61.7 526.8,60.6 528.7,60.2 530.8,60.3 532.5,60.7 534.2,60.6 535.9,59.7 537.6,59.5 539.3,60.3"/><polyline class="gb" points="440.0,122.7 441.7,123.3 442.1,125.1 443.4,126.1 444.8,126.9 445.7,128.3 447.7,128.3 449.4,129.5 451.3,129.8 453.0,130.1 454.8,130.3 456.5,129.9 458.2,129.2 459.9,129.8 460.2,127.9 462.1,127.2 462.6,125.4 464.0,124.3 463.9,122.2 465.5,121.2 467.6,121.3 469.2,120.0 471.2,119.8 472.8,120.7 474.5,121.0 476.3,120.7 478.2,120.1 479.7,121.2 481.4,120.3 482.0,118.4 483.6,117.4 483.9,115.3 485.4,114.2 487.0,115.2 487.2,117.4 489.0,118.3 490.4,119.5 491.1,121.2 492.4,122.5 493.2,124.2 495.2,124.9 495.6,126.9 496.7,128.3 497.8,129.7 498.6,131.2 499.6,132.6 501.5,133.9 502.4,136.0"/></g>
<g mask="url(#mk)"><polyline class="cb" points="335.6,437.0 336.8,435.8 337.8,434.5 338.7,433.1 338.7,431.2 340.2,430.2 340.5,428.5 341.9,427.5 341.7,425.5 343.8,424.8 344.8,423.5 344.9,421.7 345.8,420.3 346.9,419.0 348.1,417.7 349.2,416.4 349.6,414.5 352.0,414.3 352.5,412.4 354.4,412.8 356.1,413.6 357.9,414.3 359.3,415.8 361.2,415.8 362.7,417.3 364.9,416.3 366.7,416.9 368.3,418.1 369.3,419.3 371.2,419.5 372.7,420.3 373.3,422.1 374.6,423.0 376.0,423.9 377.3,424.8 378.3,426.2 380.3,426.5 380.7,428.7 382.2,429.6 384.3,429.8 385.4,431.1 386.3,432.7 388.0,433.0 389.7,433.3 391.4,433.1 393.0,433.8 393.3,432.1 394.6,430.9 395.0,429.3 396.6,428.3 397.8,427.1 397.6,425.0 399.1,424.0 399.8,422.6 401.2,421.4 401.3,419.5 403.3,418.8 404.4,417.5 404.6,415.6 405.7,414.2 407.3,413.3 407.8,411.6 408.8,410.2 410.5,409.7 412.3,410.4 413.9,409.8 415.6,409.1 416.6,410.4 417.5,411.8 418.1,413.4 418.7,415.0 418.5,416.9 419.6,418.3 420.1,419.9 421.0,421.3 422.3,422.6 423.8,421.6 423.7,419.3 425.3,418.5 427.0,417.5 427.9,416.1 427.9,414.0 429.2,412.8 430.5,411.7 431.3,410.2 432.9,410.9 434.3,412.1 436.2,412.3 437.4,413.8 438.8,414.9 440.3,415.8 442.1,416.1 443.3,417.2 443.7,419.4 445.2,420.1 446.3,421.3 447.9,421.8 449.3,422.6 449.8,424.2 450.7,425.5 451.7,426.8 453.9,427.2 453.9,429.1 455.4,430.0 456.1,431.6 456.7,429.9 456.2,428.1 457.0,426.5 458.0,424.9 457.7,423.2 457.3,421.4 458.1,419.8 458.3,418.1 459.0,416.5 460.6,415.4 460.2,413.4 461.0,411.9 462.3,410.7 462.8,409.1 464.3,408.1 466.1,408.6 467.8,408.9 469.3,407.8 470.8,407.0 472.5,407.1 474.1,406.8 475.3,408.1 477.1,408.9 478.4,410.2 479.7,411.5 480.8,413.0 481.9,414.4 483.1,415.8 484.1,414.5 485.4,413.5 486.5,412.3 488.3,412.0 489.9,411.5 490.9,410.2 492.1,409.1 493.9,408.7 495.8,408.4 497.4,407.2 499.4,407.6 501.1,406.8 502.7,406.0 504.4,405.4 506.1,404.7 507.7,403.8 509.2,402.7 511.0,402.3"/><polyline class="cb" points="321.0,434.9 322.8,434.8 324.5,435.0 326.1,435.8 327.8,436.1"/><polyline class="cb" points="511.0,384.3 512.7,383.6 514.6,383.5 516.2,382.1 518.1,382.2 520.0,382.0 521.7,381.8 522.6,379.9 524.3,379.6 525.6,378.6 526.8,377.5 528.9,377.7 529.7,375.8 531.3,375.3 533.2,375.3 534.7,373.8 536.5,373.2 538.6,374.1 540.3,373.0 541.5,371.6 542.4,369.8 544.2,368.8 545.6,367.6 547.0,366.3 548.0,367.9 550.1,368.4 551.2,369.8 551.6,372.0 553.1,373.0 555.2,373.6 556.0,375.3 557.1,376.5 557.9,378.0 558.3,379.7 559.2,381.0 559.7,382.6 560.6,384.0 561.9,385.2 562.8,386.5 564.3,387.5 566.0,388.1 567.7,388.7 569.5,388.8 571.1,389.8 572.8,390.3 574.4,391.2 576.3,391.0 578.0,391.9 578.4,394.1 580.8,394.3 581.1,396.5 582.6,397.6 584.0,398.8 585.3,400.0 587.2,400.0 588.4,398.7 589.7,397.7 591.5,397.5 593.1,396.9 594.3,395.5 595.9,395.9 597.5,395.7 599.1,395.9 600.7,396.1 602.3,396.8 604.0,396.1 605.6,396.7 607.1,397.5 608.3,398.7 609.9,399.5 611.4,400.3 612.3,402.0 613.6,403.1 615.4,403.6 616.8,404.6 618.4,403.8 619.8,402.7 621.5,402.3 623.0,401.4 624.9,401.5 626.5,400.8 628.1,400.0 629.8,399.6 631.1,401.4 633.0,400.7 634.4,401.9 636.0,402.3 637.6,402.8 639.3,402.3 641.0,402.7 642.2,403.9 643.2,405.5 645.4,404.9 646.8,405.8 647.7,407.5 649.2,408.2 650.6,409.1 649.1,410.2 648.6,411.8 648.3,413.5 646.8,414.7 646.8,416.5 646.0,418.0 645.0,419.4 644.8,421.2 643.8,422.6 642.2,423.4 640.4,423.5 638.8,424.5 637.1,424.8 635.8,426.1 635.6,427.7 635.3,429.4 635.5,431.1 634.5,432.5 633.9,434.0 633.0,435.4 632.6,437.0"/><polyline class="cb" points="513.3,386.5 513.4,388.2 513.2,389.9 513.4,391.5 514.6,393.0 515.0,394.6 515.0,396.2 515.5,397.8 513.4,398.7 512.7,401.0 511.0,402.3"/></g>
<text x="433.6" y="63.1" text-anchor="middle" font-size="8.3" fill="#40454f" stroke="#fff" stroke-width="1.1" paint-order="stroke" style="font-family:'Liberation Sans',sans-serif">昭通</text>
<text x="544.8" y="67.6" text-anchor="middle" font-size="8.3" fill="#40454f" stroke="#fff" stroke-width="1.1" paint-order="stroke" style="font-family:'Liberation Sans',sans-serif">毕节</text>
<text x="508.7" y="120.2" text-anchor="middle" font-size="8.3" fill="#40454f" stroke="#fff" stroke-width="1.1" paint-order="stroke" style="font-family:'Liberation Sans',sans-serif">六盘水</text>
<text x="1046.5" y="97.7" text-anchor="middle" font-size="8.3" fill="#40454f" stroke="#fff" stroke-width="1.1" paint-order="stroke" style="font-family:'Liberation Sans',sans-serif">衡阳</text>
<text x="980.0" y="133.3" text-anchor="middle" font-size="8.3" fill="#40454f" stroke="#fff" stroke-width="1.1" paint-order="stroke" style="font-family:'Liberation Sans',sans-serif">永州</text>
<text x="1076.9" y="182.4" text-anchor="middle" font-size="8.3" fill="#40454f" stroke="#fff" stroke-width="1.1" paint-order="stroke" style="font-family:'Liberation Sans',sans-serif">郴州</text>
<text x="441.9" y="204.5" text-anchor="middle" font-size="8.3" fill="#40454f" stroke="#fff" stroke-width="1.1" paint-order="stroke" style="font-family:'Liberation Sans',sans-serif">曲靖</text>
<text x="375.7" y="249.7" text-anchor="middle" font-size="8.3" fill="#40454f" stroke="#fff" stroke-width="1.1" paint-order="stroke" style="font-family:'Liberation Sans',sans-serif">昆明</text>
<text x="356.3" y="290.0" text-anchor="middle" font-size="8.3" fill="#40454f" stroke="#fff" stroke-width="1.1" paint-order="stroke" style="font-family:'Liberation Sans',sans-serif">玉溪</text>
<text x="556.0" y="226.1" text-anchor="middle" font-size="8.3" fill="#40454f" stroke="#fff" stroke-width="1.1" paint-order="stroke" style="font-family:'Liberation Sans',sans-serif">黔西南布依族苗族自治州</text>
<text x="772.6" y="280.1" text-anchor="middle" font-size="8.3" fill="#40454f" stroke="#fff" stroke-width="1.1" paint-order="stroke" style="font-family:'Liberation Sans',sans-serif">河池</text>
<text x="829.8" y="291.8" text-anchor="middle" font-size="8.3" fill="#40454f" stroke="#fff" stroke-width="1.1" paint-order="stroke" style="font-family:'Liberation Sans',sans-serif">柳州</text>
<text x="881.5" y="223.8" text-anchor="middle" font-size="8.3" fill="#40454f" stroke="#fff" stroke-width="1.1" paint-order="stroke" style="font-family:'Liberation Sans',sans-serif">桂林</text>
<text x="976.7" y="285.5" text-anchor="middle" font-size="8.3" fill="#40454f" stroke="#fff" stroke-width="1.1" paint-order="stroke" style="font-family:'Liberation Sans',sans-serif">贺州</text>
<text x="498.8" y="337.3" text-anchor="middle" font-size="8.3" fill="#40454f" stroke="#fff" stroke-width="1.1" paint-order="stroke" style="font-family:'Liberation Sans',sans-serif">文山壮族苗族自治州</text>
<text x="635.9" y="323.8" text-anchor="middle" font-size="8.3" fill="#40454f" stroke="#fff" stroke-width="1.1" paint-order="stroke" style="font-family:'Liberation Sans',sans-serif">百色</text>
<text x="532.4" y="428.9" text-anchor="middle" font-size="8.3" fill="#40454f" stroke="#fff" stroke-width="1.1" paint-order="stroke" style="font-family:'Liberation Sans',sans-serif">河江省</text>
<text x="598.8" y="424.4" text-anchor="middle" font-size="8.3" fill="#40454f" stroke="#fff" stroke-width="1.1" paint-order="stroke" style="font-family:'Liberation Sans',sans-serif">高平省</text>
<text x="687.7" y="436.4" text-anchor="middle" font-size="8.3" fill="#40454f" stroke="#fff" stroke-width="1.1" paint-order="stroke" style="font-family:'Liberation Sans',sans-serif">崇左</text>
<text x="815.8" y="335.5" text-anchor="middle" font-size="8.3" fill="#40454f" stroke="#fff" stroke-width="1.1" paint-order="stroke" style="font-family:'Liberation Sans',sans-serif">来宾</text>
<text x="841.0" y="383.2" text-anchor="middle" font-size="8.3" fill="#40454f" stroke="#fff" stroke-width="1.1" paint-order="stroke" style="font-family:'Liberation Sans',sans-serif">贵港</text>
<text x="756.8" y="404.2" text-anchor="middle" font-size="8.3" fill="#40454f" stroke="#fff" stroke-width="1.1" paint-order="stroke" style="font-family:'Liberation Sans',sans-serif">南宁</text>
<text x="881.1" y="417.0" text-anchor="middle" font-size="8.3" fill="#40454f" stroke="#fff" stroke-width="1.1" paint-order="stroke" style="font-family:'Liberation Sans',sans-serif">玉林</text>
<text x="957.5" y="355.3" text-anchor="middle" font-size="8.3" fill="#40454f" stroke="#fff" stroke-width="1.1" paint-order="stroke" style="font-family:'Liberation Sans',sans-serif">梧州</text>
<text x="1009.3" y="398.1" text-anchor="middle" font-size="8.3" fill="#40454f" stroke="#fff" stroke-width="1.1" paint-order="stroke" style="font-family:'Liberation Sans',sans-serif">云浮</text>
<text x="1078.0" y="339.6" text-anchor="middle" font-size="8.3" fill="#40454f" stroke="#fff" stroke-width="1.1" paint-order="stroke" style="font-family:'Liberation Sans',sans-serif">清</text>
<text x="1078.0" y="387.3" text-anchor="middle" font-size="8.3" fill="#40454f" stroke="#fff" stroke-width="1.1" paint-order="stroke" style="font-family:'Liberation Sans',sans-serif">广</text>
<circle cx="436.5" cy="66.1" r="2.1" fill="#e8655c" stroke="#fff" stroke-width="0.5"/>
<circle cx="544.8" cy="70.0" r="2.1" fill="#e8655c" stroke="#fff" stroke-width="0.5"/>
<circle cx="513.3" cy="123.1" r="2.1" fill="#e8655c" stroke="#fff" stroke-width="0.5"/>
<circle cx="969.9" cy="73.6" r="2.1" fill="#e8655c" stroke="#fff" stroke-width="0.5"/>
<circle cx="1046.0" cy="100.3" r="2.1" fill="#e8655c" stroke="#fff" stroke-width="0.5"/>
<circle cx="980.0" cy="136.4" r="2.1" fill="#e8655c" stroke="#fff" stroke-width="0.5"/>
<circle cx="1080.0" cy="179.4" r="2.1" fill="#e8655c" stroke="#fff" stroke-width="0.5"/>
<circle cx="442.1" cy="207.3" r="2.1" fill="#e8655c" stroke="#fff" stroke-width="0.5"/>
<circle cx="375.7" cy="253.5" r="2.1" fill="#e8655c" stroke="#fff" stroke-width="0.5"/>
<circle cx="355.9" cy="293.3" r="2.1" fill="#e8655c" stroke="#fff" stroke-width="0.5"/>
<circle cx="772.6" cy="283.4" r="2.1" fill="#e8655c" stroke="#fff" stroke-width="0.5"/>
<circle cx="829.3" cy="294.9" r="2.1" fill="#e8655c" stroke="#fff" stroke-width="0.5"/>
<circle cx="881.3" cy="226.9" r="2.1" fill="#e8655c" stroke="#fff" stroke-width="0.5"/>
<circle cx="976.7" cy="289.3" r="2.1" fill="#e8655c" stroke="#fff" stroke-width="0.5"/>
<circle cx="1076.4" cy="186.2" r="2.1" fill="#e8655c" stroke="#fff" stroke-width="0.5"/>
<circle cx="636.2" cy="326.9" r="2.1" fill="#e8655c" stroke="#fff" stroke-width="0.5"/>
<circle cx="815.4" cy="338.6" r="2.1" fill="#e8655c" stroke="#fff" stroke-width="0.5"/>
<circle cx="841.0" cy="386.1" r="2.1" fill="#e8655c" stroke="#fff" stroke-width="0.5"/>
<circle cx="756.4" cy="408.2" r="2.1" fill="#e8655c" stroke="#fff" stroke-width="0.5"/>
<circle cx="881.5" cy="419.9" r="2.1" fill="#e8655c" stroke="#fff" stroke-width="0.5"/>
<circle cx="957.1" cy="358.6" r="2.1" fill="#e8655c" stroke="#fff" stroke-width="0.5"/>
<circle cx="1009.5" cy="400.5" r="2.1" fill="#e8655c" stroke="#fff" stroke-width="0.5"/>
<circle cx="1078.7" cy="343.3" r="2.1" fill="#e8655c" stroke="#fff" stroke-width="0.5"/>
<path d="M1031.8,415.8 V423.7 H1067.8 V415.8" fill="none" stroke="#222" stroke-width="1.1"/>
<text x="1049.8" y="420.3" text-anchor="middle" font-size="7" fill="#222" style="font-family:'Liberation Serif',serif">50 km</text>
<g fill="none" stroke="#222" stroke-width="1"><path d="M1041.6 369.8 V375 M1038.6 372.2 L1041.6 375 L1044.6 372.2"/></g><rect x="1038.2" y="376.2" width="6.8" height="1.4" fill="#aab0b8"/>
<path d="M1054.7 369.4 l1.2 1.4 l1.9 -0.2 l0.3 1.8 l1.6 1.2 l-1.6 1.2 l-0.3 1.8 l-1.9 -0.2 l-1.2 1.4 l-1.2 -1.4 l-1.9 0.2 l-0.3 -1.8 l-1.6 -1.2 l1.6 -1.2 l0.3 -1.8 l1.9 0.2z M1054.7 371.9 a1.7 1.7 0 1 0 0.01 0z" fill="#1e1e1e" fill-rule="evenodd"/>
</svg>
</div>
<div class="abs" style="left:327.9px;top:60px;width:21.1px;height:11.1px;background:#fff"></div>
<div class="abs" style="left:352.4px;top:60px;width:21.4px;height:11.1px;background:#fff"></div>
<div class="t" style="left:330.8px;top:61.60px;font-size:8px;color:#409eff;">测距</div>
<div class="t" style="left:355.2px;top:61.60px;font-size:8px;color:#409eff;">测面</div>
<div class="abs" style="left:956.6px;top:57.2px;width:111.4px;height:10.8px;background:#fff"></div>
<div class="abs" style="left:959.4px;top:58.7px;width:8.6px;height:8.8px;background:#409eff;border-radius:1px"></div>
<svg width="12" height="12" style="left:959.4px;top:58.7px"><path d="M2 4.6 L3.9 6.6 L6.8 2.8" fill="none" stroke="#fff" stroke-width="1"/></svg>
<div class="t" style="left:974.7px;top:58.60px;font-size:8.8px;color:#409eff;">信息窗口</div>
<div class="abs" style="left:1014.5px;top:58.7px;width:8.4px;height:8.8px;background:#fff;border:0.8px solid #dcdfe6;border-radius:1px"></div>
<div class="t" style="left:1029.5px;top:58.60px;font-size:8.8px;color:#606266;">地图标记</div>
<div class="abs" style="left:980px;top:69.9px;width:49px;height:16.8px;background:#fff;border-radius:2px"></div>
<div class="t" style="left:989px;top:74.40px;font-size:7.8px;color:#c0c4cc;">城市名称</div>
<div class="abs" style="left:1037.3px;top:69.3px;width:30.2px;height:19px;background:#fff;border:0.8px solid #d8dbe0"></div>
<div class="t" style="left:1044.5px;top:75.30px;font-size:7.4px;color:#555;">地图</div>
<div class="abs" style="left:321px;top:437.3px;width:759px;height:4.8px;background:#dee7f3"></div>
<div class="abs" style="left:671.1px;top:437.3px;width:29.6px;height:4.8px;background:#5d76a5"></div>
<div class="abs" style="left:701.2px;top:437.3px;width:30.3px;height:4.8px;background:#5d76a5"></div>
<svg width="1080" height="564" style="left:0;top:0"><path d="M683.6 441.4 L686 439 L688.4 441.4z" fill="#3d5786"/><path d="M714 438.6 L719 438.6 L716.5 441z" fill="#3d5786"/></svg>
<div class="abs" style="left:321.6px;top:442.1px;width:758.4px;height:121.9px;background:#fff"></div>
<div class="abs" style="left:321.6px;top:442.1px;width:758.4px;height:21.6px;background:#f5f6f7"></div>
<div class="abs" style="left:321.6px;top:485.4px;width:758.4px;height:22.8px;background:#fafafa;border-bottom:0.6px solid #e8ebf0"></div>
<div class="t" style="left:351px;top:450.30px;font-size:8.2px;color:#6b6f76;">车辆标识</div>
<div class="t" style="left:445.6px;top:450.30px;font-size:8.2px;color:#6b6f76;">在线</div>
<div class="t" style="left:490px;top:450.30px;font-size:8.2px;color:#6b6f76;">车辆状态</div>
<div class="t" style="left:565.6px;top:450.30px;font-size:8.2px;color:#6b6f76;">当前告警</div>
<div class="t" style="left:641.3px;top:450.30px;font-size:8.2px;color:#6b6f76;">时速km/h</div>
<div class="t" style="left:692.3px;top:450.30px;font-size:8.2px;color:#6b6f76;">定位时间</div>
<div class="t" style="left:781px;top:450.30px;font-size:8.2px;color:#6b6f76;">当天里程km</div>
<div class="t" style="left:857.3px;top:450.30px;font-size:8.2px;color:#6b6f76;">总里程km</div>
<div class="t" style="left:920.6px;top:450.30px;font-size:8.2px;color:#6b6f76;">设备号</div>
<div class="t" style="left:996.3px;top:450.30px;font-size:8.2px;color:#6b6f76;">地址</div>
<div class="abs" style="left:321.6px;top:442px;width:758.4px;height:122px;overflow:hidden">
<div class="t" style="left:7.0px;top:30.50px;font-size:8.2px;color:#7a7d83;">1</div>
<div class="t" style="left:29.399999999999977px;top:30.50px;font-size:8.2px;color:#7a7d83;">7吨叉车-自带NC-10LZ</div>
<div class="t" style="left:124.0px;top:30.50px;font-size:8.2px;color:#f0202a;">离线</div>
<div class="t" style="left:168.39999999999998px;top:30.50px;font-size:8.2px;color:#7a7d83;">未定位</div>
<div class="t" style="left:244.0px;top:30.50px;font-size:8.2px;color:#7a7d83;">无</div>
<div class="t" style="left:319.69999999999993px;top:30.50px;font-size:8.2px;color:#7a7d83;">0</div>
<div class="t" style="left:370.69999999999993px;top:30.50px;font-size:8.2px;color:#7a7d83;">2025-12-19 15:52:00</div>
<div class="t" style="left:459.4px;top:30.50px;font-size:8.2px;color:#7a7d83;">0.0</div>
<div class="t" style="left:535.6999999999999px;top:30.50px;font-size:8.2px;color:#7a7d83;">637.6</div>
<div class="t" style="left:599.0px;top:30.50px;font-size:8.2px;color:#7a7d83;">518250700003</div>
<div class="t" style="left:674.6999999999999px;top:30.50px;font-size:8.2px;color:#7a7d83;">广西壮族自治区河池市南丹县</div>
<div class="t" style="left:7.0px;top:52.95px;font-size:8.2px;color:#7a7d83;">2</div>
<div class="t" style="left:29.399999999999977px;top:52.95px;font-size:8.2px;color:#7a7d83;">正面吊-自带ZD-03LZ</div>
<div class="t" style="left:124.0px;top:52.95px;font-size:8.2px;color:#f0202a;">离线</div>
<div class="t" style="left:168.39999999999998px;top:52.95px;font-size:8.2px;color:#7a7d83;">未定位</div>
<div class="t" style="left:244.0px;top:52.95px;font-size:8.2px;color:#7a7d83;">无</div>
<div class="t" style="left:319.69999999999993px;top:52.95px;font-size:8.2px;color:#7a7d83;">0</div>
<div class="t" style="left:370.69999999999993px;top:52.95px;font-size:8.2px;color:#7a7d83;">2025-12-18 21:48:55</div>
<div class="t" style="left:459.4px;top:52.95px;font-size:8.2px;color:#7a7d83;">2.3</div>
<div class="t" style="left:535.6999999999999px;top:52.95px;font-size:8.2px;color:#7a7d83;">1778.6</div>
<div class="t" style="left:599.0px;top:52.95px;font-size:8.2px;color:#7a7d83;">518250700001</div>
<div class="t" style="left:674.6999999999999px;top:52.95px;font-size:8.2px;color:#7a7d83;">广西壮族自治区河池市南丹县</div>
<div class="t" style="left:7.0px;top:75.40px;font-size:8.2px;color:#7a7d83;">3</div>
<div class="t" style="left:29.399999999999977px;top:75.40px;font-size:8.2px;color:#7a7d83;">大装载机-自带ZZ-16LZ</div>
<div class="t" style="left:124.0px;top:75.40px;font-size:8.2px;color:#f0202a;">离线</div>
<div class="t" style="left:168.39999999999998px;top:75.40px;font-size:8.2px;color:#7a7d83;">定位</div>
<div class="t" style="left:244.0px;top:75.40px;font-size:8.2px;color:#7a7d83;">无</div>
<div class="t" style="left:319.69999999999993px;top:75.40px;font-size:8.2px;color:#7a7d83;">2.5</div>
<div class="t" style="left:370.69999999999993px;top:75.40px;font-size:8.2px;color:#7a7d83;">2025-12-19 15:41:49</div>
<div class="t" style="left:459.4px;top:75.40px;font-size:8.2px;color:#7a7d83;">0.0</div>
<div class="t" style="left:535.6999999999999px;top:75.40px;font-size:8.2px;color:#7a7d83;">386.7</div>
<div class="t" style="left:599.0px;top:75.40px;font-size:8.2px;color:#7a7d83;">518250700002</div>
<div class="t" style="left:674.6999999999999px;top:75.40px;font-size:8.2px;color:#7a7d83;">广西壮族自治区河池市南丹县</div>
</div>
<div class="abs" style="left:555.4px;top:99.3px;width:285.7px;height:120.1px;background:#fff;border:0.8px solid #d6d9de;box-shadow:0 0 2px rgba(0,0,0,0.08)"></div>
<div class="abs" style="left:562.2px;top:105.4px;width:265.8px;height:17.6px;background:#f5f5f5"></div>
<div class="abs" style="left:562.2px;top:140.6px;width:265.8px;height:17.6px;background:#f5f5f5"></div>
<div class="abs" style="left:562.2px;top:176.1px;width:265.8px;height:17.6px;background:#f5f5f5"></div>
<div class="t" style="left:562.8px;top:110.80px;font-size:8.8px;color:#a0a3a8;">车辆标识:</div>
<div class="t" style="left:606.7px;top:110.80px;font-size:8.8px;color:#3d424a;">大装载机-自带ZZ...</div>
<div class="t" style="left:683px;top:110.80px;font-size:8.8px;color:#a0a3a8;">系统时间:</div>
<div class="t" style="left:733.5px;top:110.80px;font-size:8.8px;color:#3d424a;letter-spacing:0.32px">2025-12-19 15:41:53</div>
<div class="t" style="left:562.8px;top:129.10px;font-size:8.8px;color:#a0a3a8;">设备号码:</div>
<div class="t" style="left:606.7px;top:129.10px;font-size:8.8px;color:#3d424a;letter-spacing:0.2px">518250700002</div>
<div class="t" style="left:683px;top:129.10px;font-size:8.8px;color:#a0a3a8;">设备时间:</div>
<div class="t" style="left:733.5px;top:129.10px;font-size:8.8px;color:#3d424a;letter-spacing:0.32px">2025-12-19 15:41:49</div>
<div class="t" style="left:562.8px;top:146.40px;font-size:8.8px;color:#a0a3a8;">行驶速度:</div>
<div class="t" style="left:606.7px;top:146.40px;font-size:8.8px;color:#3d424a;">2.5 km/h</div>
<div class="t" style="left:683px;top:146.40px;font-size:8.8px;color:#3d424a;">定位</div>
<div class="t" style="left:562.8px;top:164.80px;font-size:8.8px;color:#a0a3a8;">当前告警:</div>
<div class="t" style="left:606.7px;top:164.80px;font-size:8.8px;color:#3d424a;">无</div>
<div class="t" style="left:562.8px;top:182.60px;font-size:8.8px;color:#a0a3a8;">当前地址:</div>
<div class="t" style="left:606.7px;top:182.60px;font-size:8.8px;color:#3d424a;">广西壮族自治区河池市南丹县城关镇西南大通道南丹站...</div>
<div class="t" style="left:562.5px;top:201.10px;font-size:8.8px;color:#409eff;">历史轨迹</div>
<div class="abs" style="left:600.8px;top:199.3px;width:1.6px;height:9px;background:#aab1bc"></div>
<div class="t" style="left:605.6px;top:201.10px;font-size:8.8px;color:#52c41a;">下发指令</div>
<div class="abs" style="left:643.9px;top:199.3px;width:1.6px;height:9px;background:#aab1bc"></div>
<div class="t" style="left:648.6px;top:201.10px;font-size:8.8px;color:#e6a23c;">复制信息</div>
<div class="abs" style="left:687.2px;top:199.3px;width:1.6px;height:9px;background:#aab1bc"></div>
<div class="t" style="left:691.7px;top:201.10px;font-size:8.8px;color:#909399;">关闭窗口</div>
<svg width="1080" height="564" style="left:0;top:0"><circle cx="701.4" cy="246.7" r="12.4" fill="#fff" opacity="0.85"/><circle cx="701.4" cy="246.7" r="11.5" fill="#8ec5ee"/></svg>
<svg width="1080" height="564" style="left:0;top:0"><text x="701.6" y="250.6" text-anchor="middle" font-size="10.8" fill="#1e2a3a" style="font-family:'Liberation Sans',sans-serif">3</text></svg></body></html>
